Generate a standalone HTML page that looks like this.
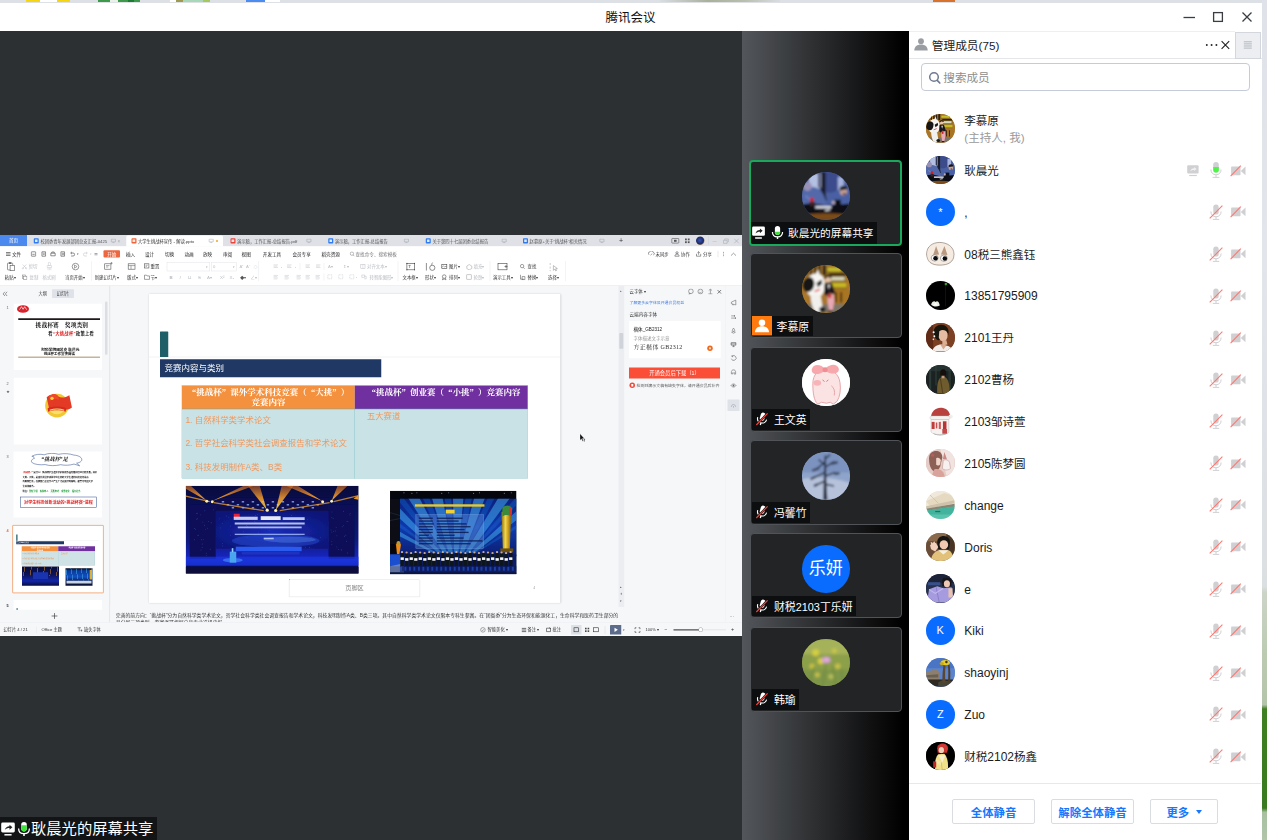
<!DOCTYPE html>
<html lang="zh-CN">
<head>
<meta charset="utf-8">
<title>腾讯会议</title>
<style>
*{box-sizing:border-box;margin:0;padding:0}
html,body{width:1267px;height:840px;overflow:hidden}
body{position:relative;font-family:"Liberation Sans","Noto Sans CJK SC",sans-serif;font-size:12px;color:#1b1b1b;background:#dfe3e8}
.abs{position:absolute}
#desk-top{left:0;top:0;width:1267px;height:3px;background:#dde0e5;overflow:hidden}
#desk-top i{position:absolute;top:0;height:2px;display:block}
#desk-right{left:1262px;top:0;width:5px;height:840px;background:linear-gradient(180deg,#dfe3e9 0,#e2e5ea 30%,#dcdfe2 69.800%,#ccd4c8 70.500%,#bccab2 78%,#b4c4aa 83.900%,#3f8022 84.400%,#3a7a20 96.200%,#a8c0a0 96.700%,#b2c6aa 100%)}
#win{left:0;top:3px;width:1262px;height:837px;background:#fff;overflow:hidden}
#titlebar{left:0;top:0;width:1262px;height:28px;background:#fff}
#title{left:0;top:0;width:1261px;height:28px;line-height:30px;text-align:center;font-size:12.500px;color:#111}
#main{left:0;top:28px;width:742px;height:809px;background:#2d3033;overflow:hidden}
#strip{left:742px;top:28px;width:167.500px;height:809px;background:linear-gradient(90deg,#53565b 0,#2e3032 42%,#121213 75%,#000 96%)}
#panel{left:909.300px;top:28px;width:352.700px;height:809px;background:#fff}
/* tiles */
.tile{position:absolute;left:8px;width:151.700px;height:85px;background:#232426;border:1px solid #505357;border-radius:4px;overflow:hidden}
.tile.act{border:2px solid #1aa85c;height:86px;left:7px;width:153px}
.tile .av{position:absolute;left:51px;top:11px;width:47.700px;height:47.700px;border-radius:50%;overflow:hidden}
.tile.act .av{left:51px;top:10px}
.tile .lb{position:absolute;left:.9px;bottom:1px;height:20.600px;background:#0d0e0f;color:#fff;font-size:10.900px;line-height:23px;padding:0 3.500px 0 25px;white-space:nowrap}
/* panel */
#phead{left:0;top:0;width:352.5px;height:28px;border-bottom:1px solid #e4e6ea}
#search{left:11.5px;top:32px;width:329px;height:28px;border:1px solid #c5cbd8;border-radius:4px;background:#fff}
.row{position:absolute;left:0;width:352px;height:30px}
.row .av{position:absolute;left:16.700px;top:.7px;width:28.600px;height:28.600px;border-radius:50%;overflow:hidden}
.row .nm{position:absolute;left:55px;top:.8px;height:30px;line-height:31px;font-size:12px;color:#1b1b1b;white-space:nowrap}
.row .ic{position:absolute;top:0}
.c{font-size:11.500px}
.blue{background:#0a6cff;color:#fff;text-align:center}
.btn{position:absolute;top:768.4px;height:24.600px;border:1px solid #d9dce1;border-radius:2px;color:#1677ff;font-size:11.400px;font-weight:bold;text-align:center;line-height:26px;background:#fff}
</style>
</head>
<body>
<div id="desk-top" class="abs">
<i style="left:26px;width:14px;background:#f5d514"></i><i style="left:40px;width:17px;background:#fff"></i><i style="left:57px;width:13px;background:#f5d514"></i>
<i style="left:98px;width:42px;background:#3c9a4a"></i><i style="left:110px;width:8px;background:#e8f2e6"></i><i style="left:128px;width:6px;background:#1d7a34"></i>
<i style="left:170px;width:6px;background:#fff"></i><i style="left:176px;width:7px;background:#9c9a55"></i><i style="left:183px;width:20px;background:#a8d8b8"></i><i style="left:203px;width:7px;background:#a6c860"></i>
<i style="left:246px;width:19px;background:#4c8cf0"></i><i style="left:265px;width:15px;background:#fff"></i>
<i style="left:660px;width:120px;background:linear-gradient(90deg,#d9dde2,#a9b09c 40%,#b9bfae 70%,#d9dde2)"></i>
<i style="left:933px;width:22px;background:#d9722c"></i>
</div>
<div id="desk-right" class="abs"></div>
<div id="win" class="abs">
<div id="titlebar" class="abs">
<div id="title" class="abs">腾讯会议</div>
<svg class="abs" style="left:1180px;top:4px" width="80" height="20" viewBox="0 0 80 20">
<path d="M3.5 10.5H15" stroke="#3a3d42" stroke-width="1.3" fill="none"/>
<rect x="33.6" y="5.6" width="8.8" height="8.8" stroke="#3a3d42" stroke-width="1.3" fill="none"/>
<path d="M62.5 5.5l9 9M71.500 5.5l-9 9" stroke="#3a3d42" stroke-width="1.3" fill="none"/>
</svg>
</div>
<div id="main" class="abs">
<div id="blabel" class="abs" style="left:0;top:786px;width:157px;height:23px;background:#131416;color:#fff;font-size:15.300px;line-height:22px;white-space:nowrap">
<svg class="abs" style="left:0;top:3.500px" width="16" height="16" viewBox="0 0 16 16"><rect x="1.200" y="1.600" width="13.600" height="9.800" rx="1.400" fill="#fff"/><path d="M4.400 13.800h7.200" stroke="#fff" stroke-width="1.500"/><path d="M4.800 9c.7-2.500 2.400-3.700 4.700-3.700v-1.600l2.900 2.500-2.900 2.500v-1.600c-1.900 0-3.400.5-4.700 1.900z" fill="#222"/></svg>
<svg class="abs" style="left:15.500px;top:3.500px" width="16" height="16" viewBox="0 0 16 16"><rect x="5.200" y="1" width="5.600" height="9.400" rx="2.800" fill="#fff"/><path d="M5.200 4.200h5.600v3.400a2.800 2.800 0 0 1-5.600 0z" fill="#3fe23a"/><path d="M2.600 7.400c0 3.200 2.300 5.200 5.400 5.200s5.400-2 5.400-5.200" stroke="#fff" stroke-width="1.300" fill="none"/><path d="M8 12.400v2.600" stroke="#fff" stroke-width="1.500" fill="none"/></svg>
<span class="abs" style="left:31px;top:1px">耿晨光的屏幕共享</span>
</div>
<div id="share" class="abs" style="left:0;top:204px;width:742px;height:401px;background:#fff;overflow:hidden">
<div id="wps" style="position:absolute;left:0;top:0;width:2968px;height:1604px;transform:scale(.25);transform-origin:0 0;background:#eceef1">
<div style="position:absolute;left:0.0px;top:0.0px;width:2968.0px;height:44.8px;background:#dfe1e7"></div>
<div style="position:absolute;left:0.0px;top:0.0px;width:108.0px;height:44.8px;background:#4c89ee"></div>
<div style="position:absolute;left:0.0px;top:10.3px;height:25.8px;line-height:25.8px;font-size:18.4px;color:#fff;white-space:nowrap;width:108.0px;text-align:center;">首页</div>
<div style="position:absolute;left:135.2px;top:12.8px;width:20.0px;height:20.8px;background:#2f7cf0;border-radius:3px"></div>
<div style="position:absolute;left:140.0px;top:18.4px;width:10.4px;height:9.6px;background:#fff;opacity:.85;border-radius:1px"></div>
<div style="position:absolute;left:161.6px;top:11.6px;height:24.1px;line-height:24.1px;font-size:17.2px;color:#555;white-space:nowrap;">校团委青年发展部团总支汇报-0425</div>
<svg style="position:absolute;left:442.0px;top:14.4px;" width="24.0" height="18.4" viewBox="0 0 6.00 4.60"><rect x=".8" y=".6" width="4.200" height="2.800" rx=".4" stroke="#9a9ea6" stroke-width=".5" fill="none"/><path d="M2 4.200h1.800" stroke="#9a9ea6" stroke-width=".5"/></svg>
<div style="position:absolute;left:470.0px;top:10.7px;height:25.8px;line-height:25.8px;font-size:18.4px;color:#aaa;white-space:nowrap;">×</div>
<div style="position:absolute;left:504.8px;top:2.4px;width:386.8px;height:42.4px;background:#fff;border-radius:6px 6px 0 0"></div>
<div style="position:absolute;left:525.6px;top:12.8px;width:20.0px;height:20.8px;background:#f0643c;border-radius:3px"></div>
<div style="position:absolute;left:530.4px;top:18.4px;width:10.4px;height:9.6px;background:#fff;opacity:.85;border-radius:1px"></div>
<div style="position:absolute;left:552.0px;top:11.6px;height:24.1px;line-height:24.1px;font-size:17.2px;color:#333;white-space:nowrap;">大学生挑战杯宣传 - 解读.pptx</div>
<svg style="position:absolute;left:832.8px;top:14.4px;" width="24.0" height="18.4" viewBox="0 0 6.00 4.60"><rect x=".8" y=".6" width="4.200" height="2.800" rx=".4" stroke="#9a9ea6" stroke-width=".5" fill="none"/><path d="M2 4.200h1.800" stroke="#9a9ea6" stroke-width=".5"/></svg>
<div style="position:absolute;left:863.6px;top:20.0px;width:8.0px;height:8.0px;background:#f5a623;border-radius:50%"></div>
<div style="position:absolute;left:921.6px;top:12.8px;width:20.0px;height:20.8px;background:#e8453c;border-radius:3px"></div>
<div style="position:absolute;left:926.4px;top:18.4px;width:10.4px;height:9.6px;background:#fff;opacity:.85;border-radius:1px"></div>
<div style="position:absolute;left:948.0px;top:11.6px;height:24.1px;line-height:24.1px;font-size:17.2px;color:#555;white-space:nowrap;">演示稿，工作汇报-总结报告.pdf</div>
<svg style="position:absolute;left:1223.6px;top:14.4px;" width="24.0" height="18.4" viewBox="0 0 6.00 4.60"><rect x=".8" y=".6" width="4.200" height="2.800" rx=".4" stroke="#9a9ea6" stroke-width=".5" fill="none"/><path d="M2 4.200h1.800" stroke="#9a9ea6" stroke-width=".5"/></svg>
<div style="position:absolute;left:1312.8px;top:12.8px;width:20.0px;height:20.8px;background:#2f7cf0;border-radius:3px"></div>
<div style="position:absolute;left:1317.6px;top:18.4px;width:10.4px;height:9.6px;background:#fff;opacity:.85;border-radius:1px"></div>
<div style="position:absolute;left:1339.2px;top:11.6px;height:24.1px;line-height:24.1px;font-size:17.2px;color:#555;white-space:nowrap;">演示稿，工作汇报-总结报告</div>
<svg style="position:absolute;left:1614.0px;top:14.4px;" width="24.0" height="18.4" viewBox="0 0 6.00 4.60"><rect x=".8" y=".6" width="4.200" height="2.800" rx=".4" stroke="#9a9ea6" stroke-width=".5" fill="none"/><path d="M2 4.200h1.800" stroke="#9a9ea6" stroke-width=".5"/></svg>
<div style="position:absolute;left:1703.2px;top:12.8px;width:20.0px;height:20.8px;background:#2f7cf0;border-radius:3px"></div>
<div style="position:absolute;left:1708.0px;top:18.4px;width:10.4px;height:9.6px;background:#fff;opacity:.85;border-radius:1px"></div>
<div style="position:absolute;left:1729.6px;top:11.6px;height:24.1px;line-height:24.1px;font-size:17.2px;color:#555;white-space:nowrap;">关于第四十七届团委总结报告</div>
<svg style="position:absolute;left:2005.2px;top:14.4px;" width="24.0" height="18.4" viewBox="0 0 6.00 4.60"><rect x=".8" y=".6" width="4.200" height="2.800" rx=".4" stroke="#9a9ea6" stroke-width=".5" fill="none"/><path d="M2 4.200h1.800" stroke="#9a9ea6" stroke-width=".5"/></svg>
<div style="position:absolute;left:2092.0px;top:12.8px;width:20.0px;height:20.8px;background:#2f7cf0;border-radius:3px"></div>
<div style="position:absolute;left:2096.8px;top:18.4px;width:10.4px;height:9.6px;background:#fff;opacity:.85;border-radius:1px"></div>
<div style="position:absolute;left:2118.4px;top:11.6px;height:24.1px;line-height:24.1px;font-size:17.2px;color:#555;white-space:nowrap;">赵慕原+关于“挑战杯”相关情况</div>
<svg style="position:absolute;left:2396.0px;top:14.4px;" width="24.0" height="18.4" viewBox="0 0 6.00 4.60"><rect x=".8" y=".6" width="4.200" height="2.800" rx=".4" stroke="#9a9ea6" stroke-width=".5" fill="none"/><path d="M2 4.200h1.800" stroke="#9a9ea6" stroke-width=".5"/></svg>
<div style="position:absolute;left:2476.0px;top:2.8px;height:39.2px;line-height:39.2px;font-size:28.0px;color:#333;white-space:nowrap;">+</div>
<svg style="position:absolute;left:2684.0px;top:10.4px;" width="40.0" height="25.6" viewBox="0 0 10.00 6.40"><rect x=".8" y="1" width="7" height="4.600" rx=".5" stroke="#555" stroke-width=".6" fill="none"/><rect x="3" y="2.300" width="2.600" height="2" fill="#555"/></svg>
<svg style="position:absolute;left:2738.0px;top:12.0px;" width="26.0" height="24.0" viewBox="0 0 6.50 6.00"><g fill="#555"><rect x=".5" y=".5" width="1.800" height="1.800"/><rect x="3.300" y=".5" width="1.800" height="1.800"/><rect x=".5" y="3.300" width="1.800" height="1.800"/><rect x="3.300" y="3.300" width="1.800" height="1.800"/></g></svg>
<div style="position:absolute;left:2784.0px;top:6.4px;width:33.6px;height:33.6px;background:radial-gradient(circle at 45% 45%,#3a55b0 0,#1a2a6a 55%,#caa050 78%,#e8b860 100%);border-radius:50%"></div>
<div style="position:absolute;left:2833.2px;top:6.0px;width:1.6px;height:34.0px;background:#c9ccd3"></div>
<div style="position:absolute;left:2850.4px;top:10.2px;height:23.5px;line-height:23.5px;font-size:16.8px;color:#9a9ea8;white-space:nowrap;">—</div>
<svg style="position:absolute;left:2890.0px;top:11.2px;" width="30.0" height="24.8" viewBox="0 0 7.50 6.20"><path d="M1 2.600h3.600v3H1zM2.200 2.400v-1.200h3.600v3h-1" stroke="#a5a9b2" stroke-width=".55" fill="none"/></svg>
<svg style="position:absolute;left:2934.0px;top:12.0px;" width="26.0" height="24.0" viewBox="0 0 6.50 6.00"><path d="M.8.8l4.400 4.400M5.200.8L.8 5.200" stroke="#a5a9b2" stroke-width=".6"/></svg>
<div style="position:absolute;left:0.0px;top:44.8px;width:2968.0px;height:155.2px;background:#fff"></div>
<svg style="position:absolute;left:22.0px;top:66.0px;" width="22.0" height="20.0" viewBox="0 0 5.50 5.00"><path d="M.5 1h4.500M.5 2.500h4.500M.5 4h4.500" stroke="#333" stroke-width=".6"/></svg>
<div style="position:absolute;left:48.0px;top:63.1px;height:25.8px;line-height:25.8px;font-size:18.4px;color:#222;white-space:nowrap;">文件</div>
<svg style="position:absolute;left:122.0px;top:64.0px;" width="24.0" height="24.0" viewBox="0 0 6.00 6.00"><rect x=".8" y=".8" width="4.400" height="4.400" rx=".5" stroke="#444" stroke-width=".6" fill="none"/><path d="M1.800 3.300h2.400" stroke="#444" stroke-width=".6"/></svg>
<svg style="position:absolute;left:163.2px;top:64.0px;" width="24.0" height="24.0" viewBox="0 0 6.00 6.00"><path d="M1.200.8h3.600v4.400h-3.600z" stroke="#444" stroke-width=".6" fill="none"/><path d="M2 2.200h2M2 3.400h2" stroke="#444" stroke-width=".5"/></svg>
<svg style="position:absolute;left:199.6px;top:64.0px;" width="24.0" height="24.0" viewBox="0 0 6.00 6.00"><path d="M.8 2.200h4.400v2.600h-4.400zM1.800 2.200v-1.200h2.400v1.200" stroke="#444" stroke-width=".6" fill="none"/></svg>
<svg style="position:absolute;left:238.8px;top:64.0px;" width="24.0" height="24.0" viewBox="0 0 6.00 6.00"><path d="M1.200.8h3.600v4.400h-3.600z" stroke="#444" stroke-width=".6" fill="none"/><circle cx="3.200" cy="3" r=".9" stroke="#444" stroke-width=".5" fill="none"/></svg>
<svg style="position:absolute;left:278.0px;top:64.0px;" width="24.0" height="24.0" viewBox="0 0 6.00 6.00"><path d="M1.400 2h2.200a1.500 1.500 0 0 1 0 3h-2M2.400 .9l-1.200 1.100 1.200 1.100" stroke="#444" stroke-width=".6" fill="none"/></svg>
<div style="position:absolute;left:308.0px;top:69.9px;height:14.6px;line-height:14.6px;font-size:10.4px;color:#555;white-space:nowrap;">▾</div>
<svg style="position:absolute;left:330.0px;top:64.0px;" width="24.0" height="24.0" viewBox="0 0 6.00 6.00"><path d="M4.600 2h-2.200a1.500 1.500 0 0 0 0 3h2M3.600 .9l1.200 1.100-1.200 1.100" stroke="#c4c6cc" stroke-width=".6" fill="none"/></svg>
<div style="position:absolute;left:358.0px;top:69.9px;height:14.6px;line-height:14.6px;font-size:10.4px;color:#ccc;white-space:nowrap;">▾</div>
<svg style="position:absolute;left:374.0px;top:66.0px;" width="20.0" height="20.0" viewBox="0 0 5.00 5.00"><path d="M1 2h3M1 3.300h3" stroke="#555" stroke-width=".5"/></svg>
<div style="position:absolute;left:414.0px;top:61.2px;width:66.0px;height:29.2px;background:#ee6640;border-radius:4px"></div>
<div style="position:absolute;left:414.0px;top:63.1px;height:25.8px;line-height:25.8px;font-size:18.4px;color:#fff;white-space:nowrap;width:66.0px;text-align:center;">开始</div>
<div style="position:absolute;left:504.0px;top:63.1px;height:25.8px;line-height:25.8px;font-size:18.4px;color:#222;white-space:nowrap;">插入</div>
<div style="position:absolute;left:580.0px;top:63.1px;height:25.8px;line-height:25.8px;font-size:18.4px;color:#222;white-space:nowrap;">设计</div>
<div style="position:absolute;left:660.0px;top:63.1px;height:25.8px;line-height:25.8px;font-size:18.4px;color:#222;white-space:nowrap;">切换</div>
<div style="position:absolute;left:737.6px;top:63.1px;height:25.8px;line-height:25.8px;font-size:18.4px;color:#222;white-space:nowrap;">动画</div>
<div style="position:absolute;left:812.0px;top:63.1px;height:25.8px;line-height:25.8px;font-size:18.4px;color:#222;white-space:nowrap;">放映</div>
<div style="position:absolute;left:892.0px;top:63.1px;height:25.8px;line-height:25.8px;font-size:18.4px;color:#222;white-space:nowrap;">审阅</div>
<div style="position:absolute;left:966.4px;top:63.1px;height:25.8px;line-height:25.8px;font-size:18.4px;color:#222;white-space:nowrap;">视图</div>
<div style="position:absolute;left:1051.2px;top:63.1px;height:25.8px;line-height:25.8px;font-size:18.4px;color:#222;white-space:nowrap;">开发工具</div>
<div style="position:absolute;left:1169.6px;top:63.1px;height:25.8px;line-height:25.8px;font-size:18.4px;color:#222;white-space:nowrap;">会员专享</div>
<div style="position:absolute;left:1286.0px;top:63.1px;height:25.8px;line-height:25.8px;font-size:18.4px;color:#222;white-space:nowrap;">稻壳资源</div>
<svg style="position:absolute;left:1398.0px;top:65.2px;" width="22.0" height="22.8" viewBox="0 0 5.50 5.70"><circle cx="2.400" cy="2.400" r="1.700" stroke="#777" stroke-width=".5" fill="none"/><path d="M3.600 3.700l1.200 1.200" stroke="#777" stroke-width=".5"/></svg>
<div style="position:absolute;left:1422.0px;top:63.1px;height:25.8px;line-height:25.8px;font-size:18.4px;color:#777;white-space:nowrap;">查找命令、搜索模板</div>
<svg style="position:absolute;left:2592.0px;top:64.0px;" width="28.0" height="24.0" viewBox="0 0 7.00 6.00"><path d="M1.200 3.800a1.600 1.600 0 0 1 .6-3 2 2 0 0 1 3.600.6 1.300 1.300 0 0 1 0 2.500" stroke="#444" stroke-width=".55" fill="none"/><path d="M2.500 4.200l1.800-1.600" stroke="#444" stroke-width=".5"/></svg>
<div style="position:absolute;left:2622.0px;top:63.7px;height:24.6px;line-height:24.6px;font-size:17.6px;color:#333;white-space:nowrap;">未同步</div>
<svg style="position:absolute;left:2696.0px;top:64.0px;" width="24.0" height="24.0" viewBox="0 0 6.00 6.00"><circle cx="3" cy="1.800" r="1.100" stroke="#444" stroke-width=".55" fill="none"/><path d="M.9 5.200c0-1.500 1-2.100 2.100-2.100s2.100.6 2.100 2.100z" stroke="#444" stroke-width=".55" fill="none"/></svg>
<div style="position:absolute;left:2724.0px;top:63.7px;height:24.6px;line-height:24.6px;font-size:17.6px;color:#333;white-space:nowrap;">协作</div>
<svg style="position:absolute;left:2782.0px;top:64.0px;" width="26.0" height="24.0" viewBox="0 0 6.50 6.00"><path d="M1 2.800v2.400h4.200v-2.400M3.100 3.800v-3M1.900 1.800l1.200-1.100 1.200 1.100" stroke="#444" stroke-width=".55" fill="none"/></svg>
<div style="position:absolute;left:2812.0px;top:63.7px;height:24.6px;line-height:24.6px;font-size:17.6px;color:#333;white-space:nowrap;">分享</div>
<div style="position:absolute;left:2871.2px;top:63.2px;width:1.6px;height:26.0px;background:#d5d7dc"></div>
<svg style="position:absolute;left:2888.0px;top:64.0px;" width="12.0" height="24.0" viewBox="0 0 3.00 6.00"><circle cx="1.500" cy="1.200" r=".45" fill="#444"/><circle cx="1.500" cy="3" r=".45" fill="#444"/><circle cx="1.500" cy="4.800" r=".45" fill="#444"/></svg>
<svg style="position:absolute;left:2920.0px;top:68.0px;" width="28.0" height="18.0" viewBox="0 0 7.00 4.50"><path d="M1 3.600l2.500-2.400 2.500 2.400" stroke="#555" stroke-width=".55" fill="none"/></svg>
<svg style="position:absolute;left:26.0px;top:106.0px;" width="36.0" height="40.0" viewBox="0 0 9.00 10.00"><rect x="1" y="1.600" width="5.200" height="6.800" rx=".6" stroke="#555" stroke-width=".6" fill="none"/><rect x="2.400" y=".8" width="2.400" height="1.500" fill="#555"/><rect x="3.600" y="4" width="4.400" height="5.200" fill="#fff" stroke="#555" stroke-width=".6"/></svg>
<div style="position:absolute;left:19.2px;top:155.7px;height:24.6px;line-height:24.6px;font-size:17.6px;color:#333;white-space:nowrap;">粘贴▾</div>
<svg style="position:absolute;left:86.0px;top:114.0px;" width="24.0" height="24.0" viewBox="0 0 6.00 6.00"><path d="M1.200 1l3.400 3.600M4.800 1L1.400 4.600" stroke="#b9bcc3" stroke-width=".5"/><circle cx="1.300" cy="5" r=".7" stroke="#b9bcc3" stroke-width=".4" fill="none"/><circle cx="4.700" cy="5" r=".7" stroke="#b9bcc3" stroke-width=".4" fill="none"/></svg>
<div style="position:absolute;left:114.0px;top:113.7px;height:24.6px;line-height:24.6px;font-size:17.6px;color:#b9bcc3;white-space:nowrap;">剪切</div>
<svg style="position:absolute;left:86.0px;top:156.0px;" width="24.0" height="24.0" viewBox="0 0 6.00 6.00"><rect x="1" y="1" width="3.200" height="3.600" stroke="#777" stroke-width=".5" fill="none"/><rect x="2.200" y="2.200" width="3.200" height="3.200" stroke="#777" stroke-width=".5" fill="#fff"/></svg>
<div style="position:absolute;left:118.0px;top:155.7px;height:24.6px;line-height:24.6px;font-size:17.6px;color:#b9bcc3;white-space:nowrap;">复制</div>
<svg style="position:absolute;left:184.0px;top:108.0px;" width="28.0" height="36.0" viewBox="0 0 7.00 9.00"><rect x="2.200" y=".8" width="2.400" height="2.600" stroke="#c5c8ce" stroke-width=".5" fill="none"/><path d="M1.200 3.600h4.400v2h-4.400zM2 5.600v2.600M3.400 5.600v2.600M4.800 5.600v2.600" stroke="#c5c8ce" stroke-width=".5" fill="none"/></svg>
<div style="position:absolute;left:169.6px;top:155.7px;height:24.6px;line-height:24.6px;font-size:17.6px;color:#b9bcc3;white-space:nowrap;">格式刷</div>
<svg style="position:absolute;left:282.0px;top:108.0px;" width="40.0" height="40.0" viewBox="0 0 10.00 10.00"><circle cx="5" cy="4.600" r="3.300" stroke="#555" stroke-width=".6" fill="none"/><path d="M4 3l2.600 1.600-2.600 1.600z" stroke="#555" stroke-width=".5" fill="none"/></svg>
<div style="position:absolute;left:260.0px;top:155.7px;height:24.6px;line-height:24.6px;font-size:17.6px;color:#333;white-space:nowrap;">当页开始▾</div>
<div style="position:absolute;left:364.0px;top:104.0px;width:1.6px;height:80.0px;background:#e6e8ec"></div>
<svg style="position:absolute;left:414.0px;top:108.0px;" width="40.0" height="40.0" viewBox="0 0 10.00 10.00"><rect x="1.200" y="1.800" width="6.200" height="5.400" stroke="#555" stroke-width=".6" fill="none"/><path d="M2.400 3.600h3.600M2.400 5h2.400" stroke="#555" stroke-width=".5"/><path d="M8 0v2.400M6.800 1.200h2.400" stroke="#555" stroke-width=".5"/></svg>
<div style="position:absolute;left:378.8px;top:155.7px;height:24.6px;line-height:24.6px;font-size:17.6px;color:#333;white-space:nowrap;">新建幻灯片▾</div>
<svg style="position:absolute;left:508.0px;top:108.0px;" width="40.0" height="40.0" viewBox="0 0 10.00 10.00"><rect x="1.200" y="1.800" width="6.800" height="5.400" stroke="#555" stroke-width=".6" fill="none"/><path d="M1.200 3.600h6.800M4 3.600v3.600" stroke="#555" stroke-width=".5"/></svg>
<div style="position:absolute;left:508.0px;top:155.7px;height:24.6px;line-height:24.6px;font-size:17.6px;color:#333;white-space:nowrap;">版式▾</div>
<svg style="position:absolute;left:574.0px;top:112.0px;" width="26.0" height="28.0" viewBox="0 0 6.50 7.00"><rect x=".8" y=".8" width="4.600" height="4.200" stroke="#555" stroke-width=".6" fill="none"/><path d="M2 2.200h2.200M2 3.400h1.400" stroke="#555" stroke-width=".5"/></svg>
<div style="position:absolute;left:602.0px;top:113.7px;height:24.6px;line-height:24.6px;font-size:17.6px;color:#333;white-space:nowrap;">重置</div>
<svg style="position:absolute;left:574.0px;top:155.2px;" width="26.0" height="25.6" viewBox="0 0 6.50 6.40"><path d="M1 1.400h2l.6.800h2.400v3.400h-5z" stroke="#555" stroke-width=".55" fill="none"/></svg>
<div style="position:absolute;left:602.0px;top:155.7px;height:24.6px;line-height:24.6px;font-size:17.6px;color:#333;white-space:nowrap;">节▾</div>
<div style="position:absolute;left:666.8px;top:108.0px;width:173.2px;height:37.2px;border:2px solid #e1e3e8;background:#fff"></div>
<div style="position:absolute;left:844.0px;top:108.0px;width:102.8px;height:37.2px;border:2px solid #e1e3e8;background:#fff"></div>
<div style="position:absolute;left:822.0px;top:119.9px;height:14.6px;line-height:14.6px;font-size:10.4px;color:#aaa;white-space:nowrap;">▾</div>
<div style="position:absolute;left:852.0px;top:114.6px;height:23.5px;line-height:23.5px;font-size:16.8px;color:#bbb;white-space:nowrap;">0</div>
<div style="position:absolute;left:930.0px;top:119.9px;height:14.6px;line-height:14.6px;font-size:10.4px;color:#aaa;white-space:nowrap;">▾</div>
<div style="position:absolute;left:958.0px;top:114.2px;height:23.5px;line-height:23.5px;font-size:16.8px;color:#b9bcc3;white-space:nowrap;">A⁺</div>
<div style="position:absolute;left:984.0px;top:114.2px;height:23.5px;line-height:23.5px;font-size:16.8px;color:#b9bcc3;white-space:nowrap;">A⁻</div>
<div style="position:absolute;left:1014.0px;top:114.2px;height:23.5px;line-height:23.5px;font-size:16.8px;color:#b9bcc3;white-space:nowrap;">◇</div>
<div style="position:absolute;left:678.0px;top:155.7px;height:24.6px;line-height:24.6px;font-size:17.6px;color:#b9bcc3;white-space:nowrap;font-weight:bold">B</div>
<div style="position:absolute;left:718.0px;top:155.7px;height:24.6px;line-height:24.6px;font-size:17.6px;color:#b9bcc3;white-space:nowrap;font-style:italic">I</div>
<div style="position:absolute;left:752.0px;top:155.7px;height:24.6px;line-height:24.6px;font-size:17.6px;color:#b9bcc3;white-space:nowrap;text-decoration:underline">U</div>
<div style="position:absolute;left:792.0px;top:155.7px;height:24.6px;line-height:24.6px;font-size:17.6px;color:#b9bcc3;white-space:nowrap;text-decoration:line-through">S</div>
<div style="position:absolute;left:828.0px;top:155.7px;height:24.6px;line-height:24.6px;font-size:17.6px;color:#b9bcc3;white-space:nowrap;">A▾</div>
<div style="position:absolute;left:880.0px;top:155.7px;height:24.6px;line-height:24.6px;font-size:17.6px;color:#b9bcc3;white-space:nowrap;">X²</div>
<div style="position:absolute;left:918.0px;top:155.7px;height:24.6px;line-height:24.6px;font-size:17.6px;color:#b9bcc3;white-space:nowrap;">X₂</div>
<div style="position:absolute;left:960.0px;top:155.7px;height:24.6px;line-height:24.6px;font-size:17.6px;color:#555;white-space:nowrap;">◆▾</div>
<div style="position:absolute;left:1002.0px;top:155.7px;height:24.6px;line-height:24.6px;font-size:17.6px;color:#b9bcc3;white-space:nowrap;">∠▾</div>
<div style="position:absolute;left:1033.2px;top:104.0px;width:1.6px;height:80.0px;background:#e6e8ec"></div>
<svg style="position:absolute;left:1092.0px;top:115.6px;" width="24.0" height="20.8" viewBox="0 0 6.00 5.20"><path d="M.6 0.9h4.4" stroke="#b9bcc3" stroke-width=".45"/><path d="M.6 2.2h3.6" stroke="#b9bcc3" stroke-width=".45"/><path d="M.6 3.5h4.4" stroke="#b9bcc3" stroke-width=".45"/></svg>
<svg style="position:absolute;left:1146.0px;top:115.6px;" width="24.0" height="20.8" viewBox="0 0 6.00 5.20"><path d="M.6 0.9h4.4" stroke="#b9bcc3" stroke-width=".45"/><path d="M.6 2.2h3.6" stroke="#b9bcc3" stroke-width=".45"/><path d="M.6 3.5h4.4" stroke="#b9bcc3" stroke-width=".45"/></svg>
<svg style="position:absolute;left:1220.0px;top:115.6px;" width="24.0" height="20.8" viewBox="0 0 6.00 5.20"><path d="M.6 0.9h4.4" stroke="#b9bcc3" stroke-width=".45"/><path d="M.6 2.2h3.6" stroke="#b9bcc3" stroke-width=".45"/><path d="M.6 3.5h4.4" stroke="#b9bcc3" stroke-width=".45"/></svg>
<svg style="position:absolute;left:1262.0px;top:115.6px;" width="24.0" height="20.8" viewBox="0 0 6.00 5.20"><path d="M.6 0.9h4.4" stroke="#b9bcc3" stroke-width=".45"/><path d="M.6 2.2h3.6" stroke="#b9bcc3" stroke-width=".45"/><path d="M.6 3.5h4.4" stroke="#b9bcc3" stroke-width=".45"/></svg>
<div style="position:absolute;left:1124.0px;top:120.5px;height:13.4px;line-height:13.4px;font-size:9.6px;color:#b9bcc3;white-space:nowrap;">▾</div>
<div style="position:absolute;left:1178.0px;top:120.5px;height:13.4px;line-height:13.4px;font-size:9.6px;color:#b9bcc3;white-space:nowrap;">▾</div>
<div style="position:absolute;left:1199.2px;top:112.0px;width:1.6px;height:28.0px;background:#e6e8ec"></div>
<div style="position:absolute;left:1295.2px;top:112.0px;width:1.6px;height:28.0px;background:#e6e8ec"></div>
<div style="position:absolute;left:1312.0px;top:114.2px;height:23.5px;line-height:23.5px;font-size:16.8px;color:#b9bcc3;white-space:nowrap;">A▾</div>
<div style="position:absolute;left:1372.0px;top:114.2px;height:23.5px;line-height:23.5px;font-size:16.8px;color:#b9bcc3;white-space:nowrap;">⇕▾</div>
<svg style="position:absolute;left:1092.0px;top:157.6px;" width="24.0" height="20.8" viewBox="0 0 6.00 5.20"><path d="M.6 0.9h4.4" stroke="#b9bcc3" stroke-width=".45"/><path d="M.6 2.2h3.6" stroke="#b9bcc3" stroke-width=".45"/><path d="M.6 3.5h4.4" stroke="#b9bcc3" stroke-width=".45"/><path d="M.6 4.8h3.6" stroke="#b9bcc3" stroke-width=".45"/></svg>
<svg style="position:absolute;left:1136.0px;top:157.6px;" width="24.0" height="20.8" viewBox="0 0 6.00 5.20"><path d="M.6 0.9h4.4" stroke="#b9bcc3" stroke-width=".45"/><path d="M.6 2.2h3.6" stroke="#b9bcc3" stroke-width=".45"/><path d="M.6 3.5h4.4" stroke="#b9bcc3" stroke-width=".45"/><path d="M.6 4.8h3.6" stroke="#b9bcc3" stroke-width=".45"/></svg>
<svg style="position:absolute;left:1184.0px;top:157.6px;" width="24.0" height="20.8" viewBox="0 0 6.00 5.20"><path d="M.6 0.9h4.4" stroke="#b9bcc3" stroke-width=".45"/><path d="M.6 2.2h3.6" stroke="#b9bcc3" stroke-width=".45"/><path d="M.6 3.5h4.4" stroke="#b9bcc3" stroke-width=".45"/><path d="M.6 4.8h3.6" stroke="#b9bcc3" stroke-width=".45"/></svg>
<svg style="position:absolute;left:1220.0px;top:157.6px;" width="24.0" height="20.8" viewBox="0 0 6.00 5.20"><path d="M.6 0.9h4.4" stroke="#b9bcc3" stroke-width=".45"/><path d="M.6 2.2h3.6" stroke="#b9bcc3" stroke-width=".45"/><path d="M.6 3.5h4.4" stroke="#b9bcc3" stroke-width=".45"/><path d="M.6 4.8h3.6" stroke="#b9bcc3" stroke-width=".45"/></svg>
<svg style="position:absolute;left:1260.0px;top:157.6px;" width="24.0" height="20.8" viewBox="0 0 6.00 5.20"><path d="M.6 0.9h4.4" stroke="#b9bcc3" stroke-width=".45"/><path d="M.6 2.2h3.6" stroke="#b9bcc3" stroke-width=".45"/><path d="M.6 3.5h4.4" stroke="#b9bcc3" stroke-width=".45"/><path d="M.6 4.8h3.6" stroke="#b9bcc3" stroke-width=".45"/></svg>
<div style="position:absolute;left:1295.2px;top:154.0px;width:1.6px;height:28.0px;background:#e6e8ec"></div>
<svg style="position:absolute;left:1308.0px;top:156.0px;" width="24.0" height="24.0" viewBox="0 0 6.00 6.00"><rect x=".8" y=".8" width="4" height="4" stroke="#b9bcc3" stroke-width=".45" fill="none" stroke-dasharray="1 .6"/></svg>
<svg style="position:absolute;left:1352.0px;top:156.0px;" width="24.0" height="24.0" viewBox="0 0 6.00 6.00"><rect x=".8" y=".8" width="4" height="4" stroke="#b9bcc3" stroke-width=".45" fill="none" stroke-dasharray="1 .6"/></svg>
<svg style="position:absolute;left:1396.0px;top:156.0px;" width="24.0" height="24.0" viewBox="0 0 6.00 6.00"><rect x=".8" y=".8" width="4" height="4" stroke="#b9bcc3" stroke-width=".45" fill="none" stroke-dasharray="1 .6"/></svg>
<div style="position:absolute;left:1422.0px;top:162.5px;height:13.4px;line-height:13.4px;font-size:9.6px;color:#b9bcc3;white-space:nowrap;">▾</div>
<svg style="position:absolute;left:1440.0px;top:114.0px;" width="24.0" height="24.0" viewBox="0 0 6.00 6.00"><rect x=".8" y=".8" width="4.200" height="4.200" stroke="#b9bcc3" stroke-width=".5" fill="none"/><path d="M2.900.8v4.200" stroke="#b9bcc3" stroke-width=".4"/></svg>
<div style="position:absolute;left:1468.0px;top:113.7px;height:24.6px;line-height:24.6px;font-size:17.6px;color:#b9bcc3;white-space:nowrap;">对齐文本▾</div>
<svg style="position:absolute;left:1444.0px;top:156.0px;" width="28.0" height="24.0" viewBox="0 0 7.00 6.00"><path d="M.8 1h2.800v2.400h-2.800zM3.600 2.200h1.600v2.600h-2" stroke="#b9bcc3" stroke-width=".5" fill="none"/></svg>
<div style="position:absolute;left:1478.0px;top:155.7px;height:24.6px;line-height:24.6px;font-size:17.6px;color:#b9bcc3;white-space:nowrap;">转智能图形▾</div>
<div style="position:absolute;left:1591.2px;top:104.0px;width:1.6px;height:80.0px;background:#e6e8ec"></div>
<svg style="position:absolute;left:1622.0px;top:108.0px;" width="44.0" height="40.0" viewBox="0 0 11.00 10.00"><rect x="1.400" y="1.400" width="7.600" height="6.400" stroke="#444" stroke-width=".6" fill="none"/><path d="M3 3.400h2.200M4.100 3.400v2.600" stroke="#444" stroke-width=".5"/><rect x=".9" y=".9" width="1" height="1" fill="#444"/><rect x="8.500" y=".9" width="1" height="1" fill="#444"/><rect x=".9" y="7.300" width="1" height="1" fill="#444"/><rect x="8.500" y="7.300" width="1" height="1" fill="#444"/></svg>
<div style="position:absolute;left:1610.0px;top:155.7px;height:24.6px;line-height:24.6px;font-size:17.6px;color:#333;white-space:nowrap;">文本框▾</div>
<svg style="position:absolute;left:1700.0px;top:108.0px;" width="52.0" height="40.0" viewBox="0 0 13.00 10.00"><path d="M1.400 1v7.500" stroke="#444" stroke-width=".6"/><circle cx="7.300" cy="5.800" r="2.600" stroke="#444" stroke-width=".6" fill="none"/><path d="M7.300 3.200c-1.500-1.200-.4-2.400.8-2.200" stroke="#444" stroke-width=".5" fill="none"/></svg>
<div style="position:absolute;left:1700.0px;top:155.7px;height:24.6px;line-height:24.6px;font-size:17.6px;color:#333;white-space:nowrap;">形状▾</div>
<svg style="position:absolute;left:1764.0px;top:114.0px;" width="28.0" height="26.0" viewBox="0 0 7.00 6.50"><rect x=".8" y=".8" width="5" height="4.200" stroke="#444" stroke-width=".6" fill="none"/><path d="M.8 4l1.600-1.600 1.400 1.200 1-1 1 1" stroke="#444" stroke-width=".45" fill="none"/></svg>
<div style="position:absolute;left:1796.0px;top:113.7px;height:24.6px;line-height:24.6px;font-size:17.6px;color:#333;white-space:nowrap;">图片▾</div>
<svg style="position:absolute;left:1764.0px;top:156.0px;" width="28.0" height="26.0" viewBox="0 0 7.00 6.50"><circle cx="3.200" cy="2.600" r="1.800" stroke="#444" stroke-width=".55" fill="none"/><path d="M2 4l-.6 2 1.800-1 1.800 1-.6-2" stroke="#444" stroke-width=".5" fill="none"/></svg>
<div style="position:absolute;left:1796.0px;top:155.7px;height:24.6px;line-height:24.6px;font-size:17.6px;color:#333;white-space:nowrap;">排列▾</div>
<svg style="position:absolute;left:1864.0px;top:114.0px;" width="28.0" height="26.0" viewBox="0 0 7.00 6.50"><path d="M3.200 1l2.600 1.600v2.400l-2.600 1.400-2.400-1.400v-2.400z" stroke="#999" stroke-width=".5" fill="none"/></svg>
<div style="position:absolute;left:1894.0px;top:113.7px;height:24.6px;line-height:24.6px;font-size:17.6px;color:#b9bcc3;white-space:nowrap;">填充▾</div>
<svg style="position:absolute;left:1864.0px;top:156.0px;" width="28.0" height="26.0" viewBox="0 0 7.00 6.50"><rect x=".8" y=".8" width="4.400" height="4.400" stroke="#999" stroke-width=".5" fill="none"/></svg>
<div style="position:absolute;left:1894.0px;top:155.7px;height:24.6px;line-height:24.6px;font-size:17.6px;color:#b9bcc3;white-space:nowrap;">轮廓▾</div>
<div style="position:absolute;left:1959.2px;top:104.0px;width:1.6px;height:80.0px;background:#e6e8ec"></div>
<svg style="position:absolute;left:1988.0px;top:108.0px;" width="52.0" height="40.0" viewBox="0 0 13.00 10.00"><rect x="1" y="1.400" width="9" height="6.400" stroke="#444" stroke-width=".6" fill="none"/><path d="M7.500 4.500h3M9 3v3" stroke="#444" stroke-width=".6"/></svg>
<div style="position:absolute;left:1972.0px;top:155.7px;height:24.6px;line-height:24.6px;font-size:17.6px;color:#333;white-space:nowrap;">演示工具▾</div>
<svg style="position:absolute;left:2078.0px;top:114.0px;" width="26.0" height="26.0" viewBox="0 0 6.50 6.50"><circle cx="2.600" cy="2.600" r="1.700" stroke="#444" stroke-width=".5" fill="none"/><path d="M3.800 3.900l1.400 1.400" stroke="#444" stroke-width=".5"/></svg>
<div style="position:absolute;left:2110.0px;top:113.7px;height:24.6px;line-height:24.6px;font-size:17.6px;color:#333;white-space:nowrap;">查找</div>
<svg style="position:absolute;left:2078.0px;top:156.0px;" width="26.0" height="26.0" viewBox="0 0 6.50 6.50"><path d="M1 .8v4.400h3.200M2.600 2.600h2.800v3h-2.800z" stroke="#444" stroke-width=".5" fill="none"/></svg>
<div style="position:absolute;left:2110.0px;top:155.7px;height:24.6px;line-height:24.6px;font-size:17.6px;color:#333;white-space:nowrap;">替换▾</div>
<svg style="position:absolute;left:2192.0px;top:108.0px;" width="48.0" height="40.0" viewBox="0 0 12.00 10.00"><path d="M2.200 1v2M2.200 4.600v2M2.200 8v1.200" stroke="#999" stroke-width=".5"/><path d="M5.400 3.600l4 3-1.800.2.900 1.700-.8.400-.9-1.700-1.400 1.100z" stroke="#777" stroke-width=".45" fill="none"/></svg>
<div style="position:absolute;left:2192.0px;top:155.7px;height:24.6px;line-height:24.6px;font-size:17.6px;color:#333;white-space:nowrap;">选择▾</div>
<div style="position:absolute;left:2261.2px;top:104.0px;width:1.6px;height:80.0px;background:#e6e8ec"></div>
<div style="position:absolute;left:0.0px;top:200.0px;width:2968.0px;height:1404.8px;background:#f6f7f9"></div>
<div style="position:absolute;left:0.0px;top:200.0px;width:2968.0px;height:6.0px;background:linear-gradient(180deg,#ecedf0,#f6f7f9)"></div>
<div style="position:absolute;left:436.4px;top:204.0px;width:4.8px;height:1344.0px;background:#e6e8eb"></div>
<svg style="position:absolute;left:10.0px;top:224.0px;" width="22.0" height="24.0" viewBox="0 0 5.50 6.00"><path d="M2.400 .8l-1.800 2.100 1.800 2.100M4.600 .8l-1.800 2.100 1.800 2.100" stroke="#555" stroke-width=".6" fill="none"/></svg>
<div style="position:absolute;left:154.0px;top:224.2px;height:23.5px;line-height:23.5px;font-size:16.8px;color:#444;white-space:nowrap;">大纲</div>
<div style="position:absolute;left:208.0px;top:217.2px;width:88.0px;height:34.8px;background:#dfe2e9;border-radius:3px"></div>
<div style="position:absolute;left:208.0px;top:224.2px;height:23.5px;line-height:23.5px;font-size:16.8px;color:#333;white-space:nowrap;width:88.0px;text-align:center;">幻灯片</div>
<div style="position:absolute;left:420.0px;top:266.0px;width:9.6px;height:213.2px;background:#dcdee2;border-radius:4px"></div>
<div style="position:absolute;left:26.0px;top:281.4px;height:21.3px;line-height:21.3px;font-size:15.2px;color:#666;white-space:nowrap;">1</div>
<div style="position:absolute;left:26.0px;top:585.4px;height:21.3px;line-height:21.3px;font-size:15.2px;color:#666;white-space:nowrap;">2</div>
<div style="position:absolute;left:26.0px;top:877.4px;height:21.3px;line-height:21.3px;font-size:15.2px;color:#666;white-space:nowrap;">3</div>
<div style="position:absolute;left:26.0px;top:1173.4px;height:21.3px;line-height:21.3px;font-size:15.2px;color:#e8703a;white-space:nowrap;font-weight:bold">4</div>
<div style="position:absolute;left:26.0px;top:1473.4px;height:21.3px;line-height:21.3px;font-size:15.2px;color:#333;white-space:nowrap;font-weight:bold">5</div>
<div style="position:absolute;left:26.0px;top:617.6px;height:16.8px;line-height:16.8px;font-size:12.0px;color:#555;white-space:nowrap;">★</div>
<div style="position:absolute;left:55.0px;top:275.0px;width:353.0px;height:265.0px;background:#fff"></div>
<svg style="position:absolute;left:66.0px;top:278.0px;" width="54.0" height="36.0" viewBox="0 0 13.50 9.00"><ellipse cx="6.500" cy="4.500" rx="6" ry="3.800" fill="#d8222c"/><path d="M3 5.200l2-3 1.600 2.600 1.600-2.600 2 3" stroke="#fff" stroke-width=".7" fill="none"/></svg>
<div style="position:absolute;left:73.2px;top:332.8px;width:326.8px;height:6.8px;background:#1e1a18"></div>
<div style="position:absolute;left:71.0px;top:346.4px;height:31.9px;line-height:31.9px;font-size:22.8px;color:#111;white-space:nowrap;width:353.0px;text-align:center;font-family:'Liberation Serif','Noto Serif CJK SC',serif;font-weight:bold;letter-spacing:.6px">挑战杯赛　奖项类别</div>
<div style="position:absolute;left:193.2px;top:380.0px;height:24.1px;line-height:24.1px;font-size:17.2px;color:#222;white-space:nowrap;font-weight:bold;letter-spacing:1px">看<span style="color:#e02020">“大挑战杯”</span>政策上看</div>
<div style="position:absolute;left:65.0px;top:447.2px;height:20.7px;line-height:20.7px;font-size:14.8px;color:#111;white-space:nowrap;width:353.0px;text-align:center;font-weight:bold">财税学院团总支 耿晨光</div>
<div style="position:absolute;left:61.0px;top:467.0px;height:19.6px;line-height:19.6px;font-size:14.0px;color:#111;white-space:nowrap;width:353.0px;text-align:center;font-weight:bold">挑战杯工作宣传解读</div>
<div style="position:absolute;left:73.2px;top:487.2px;width:326.8px;height:2.8px;background:#8a6a3a"></div>
<div style="position:absolute;left:55.0px;top:570.8px;width:353.0px;height:266.8px;background:#fff"></div>
<svg style="position:absolute;left:166.0px;top:610.0px;" width="132.0" height="132.0" viewBox="0 0 32 31"><circle cx="15" cy="17" r="11.500" fill="#f1c832"/><circle cx="15" cy="17" r="8.500" fill="#f7df6a"/><path d="M5 9c4-3 8-3 11-1s7 1.500 11-1l2.500 12c-4 3-8 2.500-11 .5s-7-1.500-11 1.500z" fill="#e23a24"/><path d="M7 7.500c4-2.500 7-2 9 0l1 4c-3-1.500-6-1-9 1z" fill="#ee4a2a"/><circle cx="10.200" cy="10" r="1.600" fill="#f7d23a"/><path d="M6 19.500c5-2 13-2 18 0l-.6 3.500c-5-1.800-12-1.800-17 0z" fill="#d62a20"/><path d="M8 21.500c4-1.200 10-1.200 14 0" stroke="#f7e27a" stroke-width="1" fill="none"/></svg>
<div style="position:absolute;left:53.6px;top:866.0px;width:354.4px;height:264.4px;background:#fff"></div>
<svg style="position:absolute;left:96.0px;top:871.2px;" width="248.0" height="57.6" viewBox="0 0 59 14"><path d="M7 3.500c3-2 8-2.500 12-1.500 4-1.800 10-1.800 14-.500 5-1.200 11-.600 15 .800 4 .300 7 1.800 7.500 3.800.500 2.200-2 3.600-5 4l3 2.600-5.500-1.700c-4 1.300-9 1.500-13 .600-5 1.300-11 1.200-15-.100-5 .600-10-.100-12.500-1.700-2.500-2 .500-4 2-4.400-1.500-1 .500-2 -2.500-1.900z" fill="#fff" stroke="#2a4a8a" stroke-width=".5"/></svg>
<div style="position:absolute;left:100.0px;top:882.4px;height:29.7px;line-height:29.7px;font-size:21.2px;color:#111;white-space:nowrap;width:236.0px;text-align:center;font-family:'Liberation Serif','Noto Serif CJK SC',serif;font-weight:bold;font-style:italic">“挑战杯”是</div>
<div style="position:absolute;left:90.0px;top:944.1px;height:12.6px;line-height:12.6px;font-size:9.0px;color:#111;white-space:nowrap;width:296.0px;text-align:left;font-weight:bold;letter-spacing:-.2px;overflow:hidden"><span style="color:#e02020">“挑战杯”</span>一是什么：挑战杯学生课外学术科技作品竞赛和创业计划竞赛，简称</div>
<div style="position:absolute;left:90.0px;top:962.5px;height:12.6px;line-height:12.6px;font-size:9.0px;color:#111;white-space:nowrap;width:296.0px;text-align:left;font-weight:bold;letter-spacing:-.2px;overflow:hidden">大挑、小挑，是由共青团中央等单位主办的大学生课外科技文化活动</div>
<div style="position:absolute;left:90.0px;top:980.1px;height:12.6px;line-height:12.6px;font-size:9.0px;color:#111;white-space:nowrap;width:296.0px;text-align:left;font-weight:bold;letter-spacing:-.2px;overflow:hidden">的奥林匹克，在高校乃至社会上产生广泛而良好的影响，被誉为中国大学</div>
<div style="position:absolute;left:90.0px;top:997.7px;height:12.6px;line-height:12.6px;font-size:9.0px;color:#111;white-space:nowrap;width:296.0px;text-align:left;font-weight:bold;letter-spacing:-.2px;overflow:hidden">生科技盛会。</div>
<div style="position:absolute;left:90.0px;top:1018.8px;height:12.0px;line-height:12.0px;font-size:8.6px;color:#111;white-space:nowrap;font-weight:bold">特点：<span style="color:#1a9a3a">创新引领　实践育人　竞赛育才　成果转化　服务社会</span></div>
<div style="position:absolute;left:81.2px;top:1047.2px;width:305.6px;height:42.4px;border:2px solid #2a4a8a;background:#fff"></div>
<div style="position:absolute;left:81.2px;top:1056.7px;height:22.7px;line-height:22.7px;font-size:16.2px;color:#e02020;white-space:nowrap;width:305.6px;text-align:center;font-weight:bold">对学生科技创新活动的<span>“挑战杯赛”</span>进程</div>
<div style="position:absolute;left:48.8px;top:1160.0px;width:366.4px;height:273.2px;background:#fff;border:3px solid #f0955c;border-radius:3px"></div>
<div style="position:absolute;left:65.2px;top:1198.0px;width:5.2px;height:26.0px;background:#1f5f68"></div>
<div style="position:absolute;left:65.2px;top:1220.8px;width:328.8px;height:1.2px;background:#e3e3e3"></div>
<div style="position:absolute;left:65.2px;top:1225.2px;width:190.8px;height:12.0px;background:#1f3864"></div>
<div style="position:absolute;left:68.0px;top:1226.4px;height:9.5px;line-height:9.5px;font-size:6.8px;color:#fff;white-space:nowrap;">竞赛内容与类别</div>
<div style="position:absolute;left:86.8px;top:1244.8px;width:146.4px;height:20.0px;background:#f4913e"></div>
<div style="position:absolute;left:233.2px;top:1244.8px;width:146.8px;height:20.0px;background:#7030a0"></div>
<div style="position:absolute;left:86.8px;top:1245.9px;height:9.0px;line-height:9.0px;font-size:6.4px;color:#fff;white-space:nowrap;width:146.4px;text-align:center;font-weight:bold">“挑战杯”课外学术科技竞赛</div>
<div style="position:absolute;left:86.8px;top:1254.7px;height:9.0px;line-height:9.0px;font-size:6.4px;color:#fff;white-space:nowrap;width:146.4px;text-align:center;font-weight:bold">竞赛内容</div>
<div style="position:absolute;left:233.2px;top:1245.9px;height:9.0px;line-height:9.0px;font-size:6.4px;color:#fff;white-space:nowrap;width:146.8px;text-align:center;font-weight:bold">“挑战杯”创业赛竞赛内容</div>
<div style="position:absolute;left:86.8px;top:1264.8px;width:293.2px;height:57.6px;background:#cfe3e6;border:1px solid #9cc5cc"></div>
<div style="position:absolute;left:232.8px;top:1264.8px;width:0.8px;height:57.6px;background:#9cc5cc"></div>
<div style="position:absolute;left:90.0px;top:1269.8px;height:9.2px;line-height:9.2px;font-size:6.6px;color:#f08a40;white-space:nowrap;">1. 自然科学类学术论文</div>
<div style="position:absolute;left:90.0px;top:1288.2px;height:9.2px;line-height:9.2px;font-size:6.6px;color:#f08a40;white-space:nowrap;">2. 哲学社会科学类社会调查报告和学术论文</div>
<div style="position:absolute;left:90.0px;top:1307.4px;height:9.2px;line-height:9.2px;font-size:6.6px;color:#f08a40;white-space:nowrap;">3. 科技发明制作A类、B类</div>
<div style="position:absolute;left:244.0px;top:1267.4px;height:9.2px;line-height:9.2px;font-size:6.6px;color:#f08a40;white-space:nowrap;">五大赛道</div>
<div style="position:absolute;left:88.0px;top:1326.0px;width:148.0px;height:76.8px;background:linear-gradient(180deg,#080c38 0,#0c1460 45%,#1426a8 75%,#080c38 100%)"><div style="position:absolute;left:0;top:0;width:100%;height:50%;background:repeating-linear-gradient(100deg,transparent 0 10px,rgba(230,150,40,.5) 10px 13px,transparent 14px 26px)"></div><div style="position:absolute;left:30%;top:30%;width:40%;height:35%;background:#1a34b0"></div></div>
<div style="position:absolute;left:262.0px;top:1333.2px;width:108.0px;height:69.6px;background:linear-gradient(180deg,#04081a 0,#0a3a9a 14%,#1050c0 50%,#0a1a50 75%,#0a1430 100%)"><div style="position:absolute;left:0;top:0;width:100%;height:70%;background:repeating-linear-gradient(80deg,transparent 0 8px,rgba(80,180,240,.5) 8px 11px,transparent 12px 20px)"></div><div style="position:absolute;left:4%;top:72%;width:92%;height:16%;background:#c8d4e6"></div><div style="position:absolute;right:2%;top:10%;width:8%;height:55%;background:#e0b030"></div></div>
<div style="position:absolute;left:53.6px;top:1460.0px;width:354.4px;height:38.8px;background:#fff"></div>
<div style="position:absolute;left:66.0px;top:1493.2px;width:5.2px;height:5.6px;background:#1f5f68"></div>
<svg style="position:absolute;left:204.0px;top:1510.0px;" width="28.0" height="28.0" viewBox="0 0 7.00 7.00"><path d="M3.500 .6v5.800M.6 3.500h5.800" stroke="#444" stroke-width=".7"/></svg>
<div style="position:absolute;left:596.4px;top:236.0px;width:1644.8px;height:1235.2px;background:#fff;box-shadow:0 0 7px 1px rgba(0,0,0,.16)"></div>
<div style="position:absolute;left:596.4px;top:487.2px;width:1644.8px;height:2.0px;background:#e6e6e6"></div>
<div style="position:absolute;left:640.0px;top:386.0px;width:32.8px;height:102.0px;background:#1f5f68;border-radius:2px 2px 0 0"></div>
<div style="position:absolute;left:640.0px;top:497.2px;width:885.2px;height:71.6px;background:#1f3864"></div>
<div style="position:absolute;left:658.4px;top:509.0px;height:47.6px;line-height:47.6px;font-size:34.0px;color:#fff;white-space:nowrap;">竞赛内容与类别</div>
<div style="position:absolute;left:728.4px;top:601.6px;width:690.8px;height:94.4px;background:#f4913e"></div>
<div style="position:absolute;left:1419.2px;top:601.6px;width:692.0px;height:94.4px;background:#7030a0"></div>
<div style="position:absolute;left:728.4px;top:696.0px;width:1382.8px;height:278.0px;background:#c9e2e5"></div>
<div style="position:absolute;left:727.2px;top:601.6px;width:1385.2px;height:373.6px;border:1.5px solid #6fb8bf;background:transparent"></div>
<div style="position:absolute;left:1418.4px;top:696.0px;width:1.6px;height:278.0px;background:#8cc6cc"></div>
<div style="position:absolute;left:728.4px;top:694.8px;width:1382.8px;height:2.4px;background:#5aa8b0"></div>
<div style="position:absolute;left:728.4px;top:603.4px;height:47.6px;line-height:47.6px;font-size:34.0px;color:#fff;white-space:nowrap;width:690.8px;text-align:center;font-family:'Liberation Serif','Noto Serif CJK SC',serif;font-weight:bold;"><span style="display:inline-block;width:1em;text-align:right">“</span>挑战杯<span style="display:inline-block;width:1em;text-align:left">”</span>课外学术科技竞赛（<span style="display:inline-block;width:1em;text-align:right">“</span>大挑<span style="display:inline-block;width:1em;text-align:left">”</span>）</div>
<div style="position:absolute;left:728.4px;top:645.4px;height:47.6px;line-height:47.6px;font-size:34.0px;color:#fff;white-space:nowrap;width:690.8px;text-align:center;font-family:'Liberation Serif','Noto Serif CJK SC',serif;font-weight:bold;">竞赛内容</div>
<div style="position:absolute;left:1440.0px;top:603.4px;height:47.6px;line-height:47.6px;font-size:34.0px;color:#fff;white-space:nowrap;width:671.2px;text-align:center;font-family:'Liberation Serif','Noto Serif CJK SC',serif;font-weight:bold;"><span style="display:inline-block;width:1em;text-align:right">“</span>挑战杯<span style="display:inline-block;width:1em;text-align:left">”</span>创业赛（<span style="display:inline-block;width:1em;text-align:right">“</span>小挑<span style="display:inline-block;width:1em;text-align:left">”</span>）竞赛内容</div>
<div style="position:absolute;left:741.6px;top:717.1px;height:47.3px;line-height:47.3px;font-size:33.8px;color:#f3975a;white-space:nowrap;">1. 自然科学类学术论文</div>
<div style="position:absolute;left:741.6px;top:809.9px;height:47.3px;line-height:47.3px;font-size:33.8px;color:#f3975a;white-space:nowrap;">2. 哲学社会科学类社会调查报告和学术论文</div>
<div style="position:absolute;left:741.6px;top:902.7px;height:47.3px;line-height:47.3px;font-size:33.8px;color:#f3975a;white-space:nowrap;">3. 科技发明制作A类、B类</div>
<div style="position:absolute;left:1468.0px;top:701.6px;height:46.5px;line-height:46.5px;font-size:33.2px;color:#f3975a;white-space:nowrap;">五大赛道</div>
<svg style="position:absolute;left:741.6px;top:1003.2px;" width="693.6" height="351.6" viewBox="0 0 173 88"><defs><linearGradient id="p1bg" x1="0" y1="0" x2="0" y2="1"><stop offset="0" stop-color="#080b3c"/><stop offset=".2" stop-color="#0a0f50"/><stop offset=".6" stop-color="#0e1878"/><stop offset=".85" stop-color="#1828c8"/><stop offset=".93" stop-color="#0c1258"/><stop offset="1" stop-color="#080a38"/></linearGradient>
<linearGradient id="bm" gradientUnits="userSpaceOnUse" x1="0" y1="24" x2="0" y2="0"><stop offset="0" stop-color="#ffd848" stop-opacity="1"/><stop offset=".5" stop-color="#ffa428" stop-opacity=".9"/><stop offset="1" stop-color="#f07a20" stop-opacity=".5"/></linearGradient>
<radialGradient id="scr" cx=".5" cy=".55" r=".6"><stop offset="0" stop-color="#1a2cb8"/><stop offset="1" stop-color="#0c1678"/></radialGradient>
<filter id="pb" x="-5%" y="-5%" width="110%" height="110%"><feGaussianBlur stdDeviation=".75"/></filter></defs>
<rect width="173" height="88" fill="url(#p1bg)"/>
<g filter="url(#pb)">
<rect x="4" y="19" width="26" height="54" fill="#0a1058"/><rect x="143" y="19" width="26" height="54" fill="#0a1058"/>
<circle cx="14.5" cy="29.2" r=".45" fill="#5a78e0" opacity=".55"/><circle cx="158.0" cy="25.5" r=".45" fill="#5a78e0" opacity=".55"/><circle cx="18.7" cy="39.6" r=".45" fill="#5a78e0" opacity=".55"/><circle cx="146.2" cy="46.4" r=".45" fill="#5a78e0" opacity=".55"/><circle cx="8.7" cy="42.8" r=".45" fill="#5a78e0" opacity=".55"/><circle cx="146.4" cy="26.4" r=".45" fill="#5a78e0" opacity=".55"/><circle cx="16.5" cy="61.7" r=".45" fill="#5a78e0" opacity=".55"/><circle cx="147.5" cy="32.7" r=".45" fill="#5a78e0" opacity=".55"/><circle cx="20.5" cy="67.5" r=".45" fill="#5a78e0" opacity=".55"/><circle cx="156.5" cy="41.0" r=".45" fill="#5a78e0" opacity=".55"/><circle cx="27.5" cy="24.2" r=".45" fill="#5a78e0" opacity=".55"/><circle cx="162.2" cy="35.9" r=".45" fill="#5a78e0" opacity=".55"/><circle cx="10.9" cy="27.7" r=".45" fill="#5a78e0" opacity=".55"/><circle cx="151.2" cy="61.2" r=".45" fill="#5a78e0" opacity=".55"/><circle cx="11.6" cy="49.9" r=".45" fill="#5a78e0" opacity=".55"/><circle cx="157.8" cy="39.9" r=".45" fill="#5a78e0" opacity=".55"/><circle cx="19.0" cy="25.0" r=".45" fill="#5a78e0" opacity=".55"/><circle cx="146.2" cy="31.9" r=".45" fill="#5a78e0" opacity=".55"/><circle cx="21.6" cy="42.5" r=".45" fill="#5a78e0" opacity=".55"/><circle cx="151.3" cy="50.1" r=".45" fill="#5a78e0" opacity=".55"/><circle cx="17.1" cy="36.4" r=".45" fill="#5a78e0" opacity=".55"/><circle cx="160.9" cy="55.6" r=".45" fill="#5a78e0" opacity=".55"/><circle cx="12.9" cy="49.6" r=".45" fill="#5a78e0" opacity=".55"/><circle cx="155.5" cy="64.0" r=".45" fill="#5a78e0" opacity=".55"/><circle cx="22.6" cy="35.8" r=".45" fill="#5a78e0" opacity=".55"/><circle cx="164.6" cy="27.7" r=".45" fill="#5a78e0" opacity=".55"/><circle cx="16.4" cy="58.3" r=".45" fill="#5a78e0" opacity=".55"/><circle cx="148.0" cy="45.5" r=".45" fill="#5a78e0" opacity=".55"/><circle cx="8.8" cy="54.1" r=".45" fill="#5a78e0" opacity=".55"/><circle cx="160.3" cy="49.5" r=".45" fill="#5a78e0" opacity=".55"/><circle cx="25.5" cy="37.1" r=".45" fill="#5a78e0" opacity=".55"/><circle cx="158.9" cy="50.5" r=".45" fill="#5a78e0" opacity=".55"/><circle cx="19.6" cy="43.9" r=".45" fill="#5a78e0" opacity=".55"/><circle cx="161.8" cy="67.3" r=".45" fill="#5a78e0" opacity=".55"/><circle cx="17.5" cy="53.9" r=".45" fill="#5a78e0" opacity=".55"/><circle cx="146.2" cy="55.7" r=".45" fill="#5a78e0" opacity=".55"/><circle cx="20.9" cy="69.7" r=".45" fill="#5a78e0" opacity=".55"/><circle cx="161.4" cy="35.7" r=".45" fill="#5a78e0" opacity=".55"/><circle cx="15.7" cy="54.1" r=".45" fill="#5a78e0" opacity=".55"/><circle cx="145.5" cy="44.2" r=".45" fill="#5a78e0" opacity=".55"/><circle cx="11.4" cy="27.6" r=".45" fill="#5a78e0" opacity=".55"/><circle cx="146.2" cy="58.9" r=".45" fill="#5a78e0" opacity=".55"/><circle cx="10.6" cy="33.9" r=".45" fill="#5a78e0" opacity=".55"/><circle cx="152.8" cy="63.8" r=".45" fill="#5a78e0" opacity=".55"/><circle cx="9.6" cy="43.6" r=".45" fill="#5a78e0" opacity=".55"/><circle cx="156.0" cy="64.4" r=".45" fill="#5a78e0" opacity=".55"/><circle cx="24.4" cy="63.5" r=".45" fill="#5a78e0" opacity=".55"/><circle cx="150.6" cy="41.9" r=".45" fill="#5a78e0" opacity=".55"/><circle cx="15.2" cy="64.4" r=".45" fill="#5a78e0" opacity=".55"/><circle cx="164.2" cy="29.2" r=".45" fill="#5a78e0" opacity=".55"/><circle cx="11.5" cy="33.1" r=".45" fill="#5a78e0" opacity=".55"/><circle cx="149.7" cy="45.3" r=".45" fill="#5a78e0" opacity=".55"/>
<rect x="30" y="25" width="113" height="38" fill="url(#scr)"/>
<rect x="30" y="12" width="113" height="13" fill="#0a0e50"/>
<rect x="36" y="15.5" width="2.400" height="1.200" fill="#8fb0ff"/><rect x="46" y="15.5" width="2.400" height="1.200" fill="#8fb0ff"/><rect x="56" y="15.5" width="2.400" height="1.200" fill="#8fb0ff"/><rect x="66" y="15.5" width="2.400" height="1.200" fill="#8fb0ff"/><rect x="76" y="15.5" width="2.400" height="1.200" fill="#8fb0ff"/><rect x="86" y="15.5" width="2.400" height="1.200" fill="#8fb0ff"/><rect x="96" y="15.5" width="2.400" height="1.200" fill="#8fb0ff"/><rect x="106" y="15.5" width="2.400" height="1.200" fill="#8fb0ff"/><rect x="116" y="15.5" width="2.400" height="1.200" fill="#8fb0ff"/><rect x="126" y="15.5" width="2.400" height="1.200" fill="#8fb0ff"/><rect x="136" y="15.5" width="2.400" height="1.200" fill="#8fb0ff"/><rect x="41" y="18.5" width="2.400" height="1.200" fill="#8fb0ff"/><rect x="51" y="18.5" width="2.400" height="1.200" fill="#8fb0ff"/><rect x="61" y="18.5" width="2.400" height="1.200" fill="#8fb0ff"/><rect x="71" y="18.5" width="2.400" height="1.200" fill="#8fb0ff"/><rect x="81" y="18.5" width="2.400" height="1.200" fill="#8fb0ff"/><rect x="91" y="18.5" width="2.400" height="1.200" fill="#8fb0ff"/><rect x="101" y="18.5" width="2.400" height="1.200" fill="#8fb0ff"/><rect x="111" y="18.5" width="2.400" height="1.200" fill="#8fb0ff"/><rect x="121" y="18.5" width="2.400" height="1.200" fill="#8fb0ff"/><rect x="131" y="18.5" width="2.400" height="1.200" fill="#8fb0ff"/><rect x="46" y="21.5" width="2.400" height="1.200" fill="#8fb0ff"/><rect x="56" y="21.5" width="2.400" height="1.200" fill="#8fb0ff"/><rect x="66" y="21.5" width="2.400" height="1.200" fill="#8fb0ff"/><rect x="76" y="21.5" width="2.400" height="1.200" fill="#8fb0ff"/><rect x="86" y="21.5" width="2.400" height="1.200" fill="#8fb0ff"/><rect x="96" y="21.5" width="2.400" height="1.200" fill="#8fb0ff"/><rect x="106" y="21.5" width="2.400" height="1.200" fill="#8fb0ff"/><rect x="116" y="21.5" width="2.400" height="1.200" fill="#8fb0ff"/><rect x="126" y="21.5" width="2.400" height="1.200" fill="#8fb0ff"/><circle cx="96.4" cy="36.9" r=".4" fill="#7a96f0" opacity=".45"/><circle cx="34.4" cy="42.2" r=".4" fill="#7a96f0" opacity=".45"/><circle cx="73.1" cy="47.3" r=".4" fill="#7a96f0" opacity=".45"/><circle cx="135.0" cy="51.5" r=".4" fill="#7a96f0" opacity=".45"/><circle cx="88.6" cy="49.0" r=".4" fill="#7a96f0" opacity=".45"/><circle cx="105.7" cy="29.8" r=".4" fill="#7a96f0" opacity=".45"/><circle cx="129.4" cy="54.5" r=".4" fill="#7a96f0" opacity=".45"/><circle cx="126.7" cy="55.1" r=".4" fill="#7a96f0" opacity=".45"/><circle cx="75.6" cy="41.6" r=".4" fill="#7a96f0" opacity=".45"/><circle cx="45.0" cy="49.6" r=".4" fill="#7a96f0" opacity=".45"/><circle cx="40.6" cy="30.3" r=".4" fill="#7a96f0" opacity=".45"/><circle cx="56.1" cy="33.5" r=".4" fill="#7a96f0" opacity=".45"/><circle cx="70.0" cy="29.8" r=".4" fill="#7a96f0" opacity=".45"/><circle cx="34.0" cy="33.1" r=".4" fill="#7a96f0" opacity=".45"/><circle cx="44.8" cy="40.4" r=".4" fill="#7a96f0" opacity=".45"/><circle cx="36.7" cy="57.7" r=".4" fill="#7a96f0" opacity=".45"/><circle cx="99.1" cy="33.1" r=".4" fill="#7a96f0" opacity=".45"/><circle cx="60.7" cy="39.8" r=".4" fill="#7a96f0" opacity=".45"/><circle cx="72.6" cy="32.2" r=".4" fill="#7a96f0" opacity=".45"/><circle cx="124.0" cy="61.8" r=".4" fill="#7a96f0" opacity=".45"/><circle cx="83.4" cy="44.5" r=".4" fill="#7a96f0" opacity=".45"/><circle cx="43.1" cy="31.5" r=".4" fill="#7a96f0" opacity=".45"/><circle cx="70.3" cy="37.0" r=".4" fill="#7a96f0" opacity=".45"/><circle cx="121.9" cy="33.5" r=".4" fill="#7a96f0" opacity=".45"/><circle cx="36.4" cy="60.3" r=".4" fill="#7a96f0" opacity=".45"/><circle cx="90.0" cy="33.0" r=".4" fill="#7a96f0" opacity=".45"/><circle cx="91.6" cy="28.9" r=".4" fill="#7a96f0" opacity=".45"/><circle cx="90.0" cy="61.3" r=".4" fill="#7a96f0" opacity=".45"/><circle cx="125.5" cy="51.7" r=".4" fill="#7a96f0" opacity=".45"/><circle cx="61.7" cy="40.5" r=".4" fill="#7a96f0" opacity=".45"/><circle cx="51.7" cy="54.2" r=".4" fill="#7a96f0" opacity=".45"/><circle cx="90.5" cy="54.5" r=".4" fill="#7a96f0" opacity=".45"/><circle cx="68.9" cy="35.6" r=".4" fill="#7a96f0" opacity=".45"/><circle cx="120.0" cy="61.5" r=".4" fill="#7a96f0" opacity=".45"/><circle cx="124.4" cy="55.4" r=".4" fill="#7a96f0" opacity=".45"/><circle cx="120.7" cy="53.2" r=".4" fill="#7a96f0" opacity=".45"/><circle cx="58.0" cy="45.6" r=".4" fill="#7a96f0" opacity=".45"/><circle cx="71.7" cy="29.0" r=".4" fill="#7a96f0" opacity=".45"/><circle cx="37.0" cy="37.5" r=".4" fill="#7a96f0" opacity=".45"/><circle cx="61.5" cy="51.5" r=".4" fill="#7a96f0" opacity=".45"/>
<ellipse cx="90" cy="55" rx="44" ry="6.500" fill="#2a58e0" opacity=".4"/><ellipse cx="104" cy="54" rx="26" ry="3" fill="#6a9af8" opacity=".3"/>
<path d="M21 15L5 0h-5v3z" fill="url(#bm)"/><path d="M26 15.500L58 0h10z" fill="url(#bm)"/><path d="M81 24L62 0h12z" fill="url(#bm)" opacity=".9"/><path d="M90 24.500L96 0h12z" fill="url(#bm)" opacity=".9"/>
<path d="M137 15.500L100 0h12z" fill="url(#bm)"/><path d="M146 15L152 0h10z" fill="url(#bm)"/><path d="M168 13l5-4v5z" fill="url(#bm)"/>
<path d="M0 10.500l24 5.500M28 17l50 8M94 25l50-8M148 16l25-6" stroke="#f0a030" stroke-width="1.300" opacity=".75"/>
<g fill="#fff2b0"><circle cx="21" cy="15.500" r="1.500"/><circle cx="26.500" cy="16" r="1.500"/><circle cx="81.500" cy="24.500" r="1.600"/><circle cx="90" cy="24.800" r="1.600"/><circle cx="137" cy="16" r="1.500"/><circle cx="146" cy="15.500" r="1.500"/></g>
<rect x="48" y="28" width="6" height="4" fill="#e8203a"/><rect x="48" y="31" width="24" height="3.200" fill="#e4eaff" opacity=".85"/><rect x="75" y="30.500" width="20" height="3.800" fill="#ffffff" opacity=".9"/><rect x="97" y="31.500" width="22" height="2.800" fill="#dde6ff" opacity=".85"/>
<rect x="49" y="36.800" width="70" height="2" fill="#dfe8ff" opacity=".8"/><rect x="52" y="40.800" width="64" height="1.800" fill="#d0dcff" opacity=".8"/>
<rect x="49" y="48" width="70" height="1.300" fill="#9ab2f4" opacity=".9"/><rect x="78" y="52" width="10" height="1.600" fill="#aec2f8"/>
<rect x="50" y="61" width="66" height="4.500" fill="#2a5af0"/><rect x="56" y="66" width="58" height="3" fill="#1a30c0"/>
<rect x="0" y="71" width="173" height="9" fill="#1c34e0" opacity=".75"/>
<ellipse cx="47" cy="74.500" rx="10" ry="2.200" fill="#3a7af4" opacity=".8"/>
<rect x="44" y="66" width="6.500" height="11" fill="#4aa6ee"/><rect x="46" y="62.500" width="1.600" height="4" fill="#9ad0ff"/>
<rect x="0" y="81" width="173" height="7" fill="#090b3a"/></g></svg>
<svg style="position:absolute;left:1558.4px;top:1023.2px;" width="509.2" height="334.0" viewBox="0 0 127 84"><defs><linearGradient id="p2bg" x1="0" y1="0" x2="0" y2="1"><stop offset="0" stop-color="#08207c"/><stop offset=".5" stop-color="#0c3aae"/><stop offset="1" stop-color="#081e70"/></linearGradient>
<linearGradient id="gold" x1="0" y1="0" x2="1" y2="0"><stop offset="0" stop-color="#8a6a10"/><stop offset=".4" stop-color="#f2d84a"/><stop offset=".7" stop-color="#c89a20"/><stop offset="1" stop-color="#7a5a10"/></linearGradient>
<clipPath id="scrc"><rect x="10" y="8" width="117" height="56"/></clipPath>
<filter id="pb2" x="-5%" y="-5%" width="110%" height="110%"><feGaussianBlur stdDeviation=".65"/></filter></defs>
<rect width="127" height="84" fill="#04060c"/>
<g filter="url(#pb2)">
<rect x="10" y="8" width="117" height="58" fill="url(#p2bg)"/>
<g clip-path="url(#scrc)"><path d="M42.2 62L-33.1 24.4L-19.6 24.4L46.4 62z" fill="#4ab4f4" opacity="0.5"/><path d="M45.8 62L-21.8 15.0L-13.5 15.0L48.4 62z" fill="#2070d8" opacity="0.35"/><path d="M47.8 62L-14.4 6.4L-0.9 6.4L52.0 62z" fill="#4ab4f4" opacity="0.5"/><path d="M51.4 62L-0.7 -1.0L7.6 -1.0L54.0 62z" fill="#2070d8" opacity="0.35"/><path d="M53.4 62L8.8 -7.3L22.2 -7.3L57.6 62z" fill="#4ab4f4" opacity="0.5"/><path d="M57.0 62L24.2 -12.2L32.5 -12.2L59.6 62z" fill="#2070d8" opacity="0.35"/><path d="M59.0 62L35.0 -15.6L48.5 -15.6L63.2 62z" fill="#4ab4f4" opacity="0.5"/><path d="M62.6 62L51.4 -17.6L59.7 -17.6L65.2 62z" fill="#2070d8" opacity="0.35"/><path d="M64.6 62L62.8 -18.0L76.2 -18.0L68.8 62z" fill="#4ab4f4" opacity="0.5"/><path d="M68.2 62L79.2 -16.8L87.6 -16.8L70.8 62z" fill="#2070d8" opacity="0.35"/><path d="M70.2 62L90.3 -14.1L103.7 -14.1L74.4 62z" fill="#4ab4f4" opacity="0.5"/><path d="M73.8 62L106.0 -9.9L114.3 -9.9L76.4 62z" fill="#2070d8" opacity="0.35"/><path d="M75.8 62L115.9 -4.3L129.4 -4.3L80.0 62z" fill="#4ab4f4" opacity="0.5"/><path d="M79.4 62L130.1 2.5L138.4 2.5L82.0 62z" fill="#2070d8" opacity="0.35"/><path d="M81.4 62L138.1 10.6L151.5 10.6L85.6 62z" fill="#4ab4f4" opacity="0.5"/><path d="M85.0 62L150.0 19.6L158.3 19.6L87.6 62z" fill="#2070d8" opacity="0.35"/></g>
<g fill="#7a8ab0"><circle cx="14" cy="2" r=".6"/><circle cx="22" cy="2.500" r=".6"/><circle cx="27" cy="2" r=".5"/><circle cx="52" cy="2.500" r=".6"/><circle cx="59" cy="2" r=".5"/><circle cx="84" cy="2.500" r=".6"/><circle cx="90" cy="2" r=".5"/><circle cx="115" cy="2.500" r=".6"/><circle cx="122" cy="2" r=".5"/></g>
<rect x="0" y="8" width="10" height="46" fill="#0a0e18"/><path d="M0 22l10 3M0 30l10-2" stroke="#2a3040" stroke-width=".6"/>
<rect x="26" y="24" width="68" height="34" fill="#6a96d8" opacity=".35"/><rect x="26" y="24" width="68" height="34" fill="none" stroke="#9ac0f4" stroke-width=".4" opacity=".7"/>
<rect x="25" y="13.600" width="70" height="2.400" fill="#e8c82a"/><rect x="25" y="13.600" width="70" height="2.400" fill="none"/><rect x="56" y="19" width="9" height="4" fill="#f0d030"/>
<rect x="29" y="27.00" width="14" height="1.300" fill="#0a1a50" opacity=".85"/><rect x="47" y="27.00" width="26" height="1.300" fill="#0a1a50" opacity=".85"/><rect x="29" y="29.85" width="14" height="1.300" fill="#0a1a50" opacity=".85"/><rect x="47" y="29.85" width="22" height="1.300" fill="#0a1a50" opacity=".85"/><rect x="29" y="32.70" width="15" height="1.300" fill="#0a1a50" opacity=".85"/><rect x="47" y="32.70" width="30" height="1.300" fill="#0a1a50" opacity=".85"/><rect x="29" y="35.55" width="14" height="1.300" fill="#0a1a50" opacity=".85"/><rect x="47" y="35.55" width="34" height="1.300" fill="#0a1a50" opacity=".85"/><rect x="29" y="38.40" width="14" height="1.300" fill="#0a1a50" opacity=".85"/><rect x="47" y="38.40" width="28" height="1.300" fill="#0a1a50" opacity=".85"/><rect x="29" y="41.25" width="14" height="1.300" fill="#0a1a50" opacity=".85"/><rect x="47" y="41.25" width="32" height="1.300" fill="#0a1a50" opacity=".85"/><rect x="29" y="44.10" width="10" height="1.300" fill="#0a1a50" opacity=".85"/><rect x="47" y="44.10" width="18" height="1.300" fill="#0a1a50" opacity=".85"/><rect x="29" y="46.95" width="14" height="1.300" fill="#0a1a50" opacity=".85"/><rect x="47" y="46.95" width="27" height="1.300" fill="#0a1a50" opacity=".85"/><rect x="29" y="49.80" width="14" height="1.300" fill="#0a1a50" opacity=".85"/><rect x="47" y="49.80" width="46" height="1.300" fill="#0a1a50" opacity=".85"/><rect x="29" y="52.65" width="14" height="1.300" fill="#0a1a50" opacity=".85"/><rect x="47" y="52.65" width="34" height="1.300" fill="#0a1a50" opacity=".85"/>
<path d="M112 21l10 0 -1.500 38h-7z" fill="url(#gold)"/><path d="M113 17c3-3 8-3 10 1l-1 8c-3-2-6-2-9 0z" fill="#3a8a3a"/><path d="M120 16c2 1 3 3 2.500 7l-2 3z" fill="#d8302a"/><rect x="111" y="58" width="13" height="4" fill="#6a5010"/>
<path d="M6 54c1-2 4-2 5 0l-1.500 10h-2.500z" fill="#f08a18"/><circle cx="8.500" cy="52.500" r="2" fill="#b89a30"/>
<rect x="0" y="64" width="127" height="20" fill="#0a1e68"/><rect x="0" y="64" width="12" height="12" fill="#1a50d0"/><path d="M0 76l14-3v11H0z" fill="#9aa6c0" opacity=".6"/>
<rect x="11.00" y="60.50" width="2.200" height="2.400" rx="1" fill="#c8a890"/><rect x="10.30" y="62.80" width="3.700" height="13" fill="#10131f"/><rect x="10.60" y="67.00" width="3.300" height="2.600" fill="#f4f6fa"/><rect x="15.55" y="61.00" width="2.200" height="2.400" rx="1" fill="#c8a890"/><rect x="14.85" y="63.20" width="3.700" height="13" fill="#10131f"/><rect x="15.15" y="67.80" width="3.300" height="2.600" fill="#f4f6fa"/><rect x="20.10" y="61.50" width="2.200" height="2.400" rx="1" fill="#c8a890"/><rect x="19.40" y="63.60" width="3.700" height="13" fill="#10131f"/><rect x="19.70" y="67.00" width="3.300" height="2.600" fill="#f4f6fa"/><rect x="24.65" y="60.50" width="2.200" height="2.400" rx="1" fill="#c8a890"/><rect x="23.95" y="62.80" width="3.700" height="13" fill="#10131f"/><rect x="24.25" y="67.80" width="3.300" height="2.600" fill="#f4f6fa"/><rect x="29.20" y="61.00" width="2.200" height="2.400" rx="1" fill="#c8a890"/><rect x="28.50" y="63.20" width="3.700" height="13" fill="#10131f"/><rect x="28.80" y="67.00" width="3.300" height="2.600" fill="#f4f6fa"/><rect x="33.75" y="61.50" width="2.200" height="2.400" rx="1" fill="#c8a890"/><rect x="33.05" y="63.60" width="3.700" height="13" fill="#10131f"/><rect x="33.35" y="67.80" width="3.300" height="2.600" fill="#f4f6fa"/><rect x="38.30" y="60.50" width="2.200" height="2.400" rx="1" fill="#c8a890"/><rect x="37.60" y="62.80" width="3.700" height="13" fill="#10131f"/><rect x="37.90" y="67.00" width="3.300" height="2.600" fill="#f4f6fa"/><rect x="42.85" y="61.00" width="2.200" height="2.400" rx="1" fill="#c8a890"/><rect x="42.15" y="63.20" width="3.700" height="13" fill="#10131f"/><rect x="42.45" y="67.80" width="3.300" height="2.600" fill="#f4f6fa"/><rect x="47.40" y="61.50" width="2.200" height="2.400" rx="1" fill="#c8a890"/><rect x="46.70" y="63.60" width="3.700" height="13" fill="#10131f"/><rect x="47.00" y="67.00" width="3.300" height="2.600" fill="#f4f6fa"/><rect x="51.95" y="60.50" width="2.200" height="2.400" rx="1" fill="#c8a890"/><rect x="51.25" y="62.80" width="3.700" height="13" fill="#10131f"/><rect x="51.55" y="67.80" width="3.300" height="2.600" fill="#f4f6fa"/><rect x="56.50" y="61.00" width="2.200" height="2.400" rx="1" fill="#c8a890"/><rect x="55.80" y="63.20" width="3.700" height="13" fill="#10131f"/><rect x="56.10" y="67.00" width="3.300" height="2.600" fill="#f4f6fa"/><rect x="61.05" y="61.50" width="2.200" height="2.400" rx="1" fill="#c8a890"/><rect x="60.35" y="63.60" width="3.700" height="13" fill="#10131f"/><rect x="60.65" y="67.80" width="3.300" height="2.600" fill="#f4f6fa"/><rect x="65.60" y="60.50" width="2.200" height="2.400" rx="1" fill="#c8a890"/><rect x="64.90" y="62.80" width="3.700" height="13" fill="#10131f"/><rect x="65.20" y="67.00" width="3.300" height="2.600" fill="#f4f6fa"/><rect x="70.15" y="61.00" width="2.200" height="2.400" rx="1" fill="#c8a890"/><rect x="69.45" y="63.20" width="3.700" height="13" fill="#10131f"/><rect x="69.75" y="67.80" width="3.300" height="2.600" fill="#f4f6fa"/><rect x="74.70" y="61.50" width="2.200" height="2.400" rx="1" fill="#c8a890"/><rect x="74.00" y="63.60" width="3.700" height="13" fill="#10131f"/><rect x="74.30" y="67.00" width="3.300" height="2.600" fill="#f4f6fa"/><rect x="79.25" y="60.50" width="2.200" height="2.400" rx="1" fill="#c8a890"/><rect x="78.55" y="62.80" width="3.700" height="13" fill="#10131f"/><rect x="78.85" y="67.80" width="3.300" height="2.600" fill="#f4f6fa"/><rect x="83.80" y="61.00" width="2.200" height="2.400" rx="1" fill="#c8a890"/><rect x="83.10" y="63.20" width="3.700" height="13" fill="#10131f"/><rect x="83.40" y="67.00" width="3.300" height="2.600" fill="#f4f6fa"/><rect x="88.35" y="61.50" width="2.200" height="2.400" rx="1" fill="#c8a890"/><rect x="87.65" y="63.60" width="3.700" height="13" fill="#10131f"/><rect x="87.95" y="67.80" width="3.300" height="2.600" fill="#f4f6fa"/><rect x="92.90" y="60.50" width="2.200" height="2.400" rx="1" fill="#c8a890"/><rect x="92.20" y="62.80" width="3.700" height="13" fill="#10131f"/><rect x="92.50" y="67.00" width="3.300" height="2.600" fill="#f4f6fa"/><rect x="97.45" y="61.00" width="2.200" height="2.400" rx="1" fill="#c8a890"/><rect x="96.75" y="63.20" width="3.700" height="13" fill="#10131f"/><rect x="97.05" y="67.80" width="3.300" height="2.600" fill="#f4f6fa"/><rect x="102.00" y="61.50" width="2.200" height="2.400" rx="1" fill="#c8a890"/><rect x="101.30" y="63.60" width="3.700" height="13" fill="#10131f"/><rect x="101.60" y="67.00" width="3.300" height="2.600" fill="#f4f6fa"/><rect x="106.55" y="60.50" width="2.200" height="2.400" rx="1" fill="#c8a890"/><rect x="105.85" y="62.80" width="3.700" height="13" fill="#10131f"/><rect x="106.15" y="67.80" width="3.300" height="2.600" fill="#f4f6fa"/><rect x="111.10" y="61.00" width="2.200" height="2.400" rx="1" fill="#c8a890"/><rect x="110.40" y="63.20" width="3.700" height="13" fill="#10131f"/><rect x="110.70" y="67.00" width="3.300" height="2.600" fill="#f4f6fa"/><rect x="115.65" y="61.50" width="2.200" height="2.400" rx="1" fill="#c8a890"/><rect x="114.95" y="63.60" width="3.700" height="13" fill="#10131f"/><rect x="115.25" y="67.80" width="3.300" height="2.600" fill="#f4f6fa"/><rect x="120.20" y="60.50" width="2.200" height="2.400" rx="1" fill="#c8a890"/><rect x="119.50" y="62.80" width="3.700" height="13" fill="#10131f"/><rect x="119.80" y="67.00" width="3.300" height="2.600" fill="#f4f6fa"/>
<rect x="10" y="75.500" width="117" height="6" fill="#0a1a60" opacity=".75"/><path d="M10 78.500h117" stroke="#2a5ad0" stroke-width="4" stroke-dasharray="2 2.500" opacity=".6"/>
<rect x="0" y="82" width="127" height="2" fill="#081440"/></g></svg>
<div style="position:absolute;left:1156.0px;top:1377.2px;width:524.0px;height:70.4px;border:2.500px dotted #b8b8b8"></div>
<div style="position:absolute;left:1156.0px;top:1394.6px;height:34.7px;line-height:34.7px;font-size:24.8px;color:#8a8a8a;white-space:nowrap;width:524.0px;text-align:center;">页脚区</div>
<div style="position:absolute;left:2134.0px;top:1406.7px;height:14.6px;line-height:14.6px;font-size:10.4px;color:#777;white-space:nowrap;">4</div>
<svg style="position:absolute;left:2316.0px;top:792.0px;" width="28.0" height="40.0" viewBox="0 0 7.00 10.00"><path d="M1 .8v6.400l1.500-1.300 1.100 2.400.9-.4-1.100-2.300h1.900z" fill="#111" stroke="#fff" stroke-width=".3"/><path d="M4.700 6.200h1.400M5.400 6.200v2.400" stroke="#111" stroke-width=".5"/></svg>
<div style="position:absolute;left:2474.0px;top:204.0px;width:24.4px;height:1284.0px;background:#ecedf1"></div>
<div style="position:absolute;left:2477.2px;top:392.0px;width:16.0px;height:63.2px;background:#d0d3d9;border-radius:3px"></div>
<div style="position:absolute;left:2479.2px;top:215.9px;height:14.6px;line-height:14.6px;font-size:10.4px;color:#666;white-space:nowrap;">▴</div>
<div style="position:absolute;left:2479.2px;top:1403.1px;height:14.6px;line-height:14.6px;font-size:10.4px;color:#555;white-space:nowrap;">▴</div>
<div style="position:absolute;left:2479.2px;top:1430.7px;height:14.6px;line-height:14.6px;font-size:10.4px;color:#555;white-space:nowrap;">⇞</div>
<div style="position:absolute;left:2479.2px;top:1458.7px;height:14.6px;line-height:14.6px;font-size:10.4px;color:#555;white-space:nowrap;">▾</div>
<div style="position:absolute;left:2498.4px;top:204.0px;width:401.6px;height:1344.0px;background:#f6f7f9"></div>
<div style="position:absolute;left:2518.0px;top:213.7px;height:24.6px;line-height:24.6px;font-size:17.6px;color:#333;white-space:nowrap;">云字体 ▾</div>
<svg style="position:absolute;left:2750.0px;top:214.0px;" width="28.0" height="24.0" viewBox="0 0 7.00 6.00"><circle cx="3.400" cy="2.800" r="2.300" stroke="#555" stroke-width=".5" fill="none"/><path d="M2 4.600l-.6 1.200 1.800-.7" stroke="#555" stroke-width=".5" fill="none"/></svg>
<svg style="position:absolute;left:2788.0px;top:214.0px;" width="28.0" height="24.0" viewBox="0 0 7.00 6.00"><circle cx="3.400" cy="3" r="2.400" stroke="#555" stroke-width=".5" fill="none"/><path d="M2.300 3.600c.6.800 1.600.800 2.200 0M2.600 2.300v.2M4.200 2.300v.2" stroke="#555" stroke-width=".5" fill="none"/></svg>
<svg style="position:absolute;left:2828.0px;top:214.0px;" width="28.0" height="24.0" viewBox="0 0 7.00 6.00"><path d="M3.400.8v4.400M1.800 2l1.600-1.400 1.600 1.400M1.400 5.400h4" stroke="#555" stroke-width=".5" fill="none"/></svg>
<svg style="position:absolute;left:2866.0px;top:216.0px;" width="24.0" height="22.0" viewBox="0 0 6.00 5.50"><path d="M1 1l3.600 3.600M4.600 1L1 4.600" stroke="#333" stroke-width=".6"/></svg>
<div style="position:absolute;left:2518.0px;top:257.9px;height:21.8px;line-height:21.8px;font-size:15.6px;color:#3a7ae0;white-space:nowrap;">了解更多云字体及开通会员权益</div>
<div style="position:absolute;left:2518.0px;top:306.3px;height:25.8px;line-height:25.8px;font-size:18.4px;color:#333;white-space:nowrap;">云端内容字体</div>
<div style="position:absolute;left:2516.0px;top:344.0px;width:366.8px;height:148.8px;background:#fff;border-radius:3px"></div>
<div style="position:absolute;left:2534.0px;top:363.1px;height:25.8px;line-height:25.8px;font-size:18.4px;color:#222;white-space:nowrap;">楷体_GB2312</div>
<div style="position:absolute;left:2534.0px;top:401.8px;height:25.2px;line-height:25.2px;font-size:18.0px;color:#999;white-space:nowrap;">字体描述文字示意</div>
<div style="position:absolute;left:2534.0px;top:432.8px;height:33.6px;line-height:33.6px;font-size:24.0px;color:#333;white-space:nowrap;font-family:'Liberation Serif','Noto Serif CJK SC',serif;letter-spacing:1.200px">方正楷体  GB2312</div>
<div style="position:absolute;left:2829.2px;top:442.4px;width:21.6px;height:21.6px;background:#f26a1c;border-radius:50%"><div style="position:absolute;left:34%;top:30%;width:32%;height:40%;background:#fff;border-radius:2px"></div></div>
<div style="position:absolute;left:2516.0px;top:529.6px;width:364.0px;height:44.8px;background:#fb4e36"></div>
<div style="position:absolute;left:2516.0px;top:538.0px;height:29.7px;line-height:29.7px;font-size:21.2px;color:#fff;white-space:nowrap;width:364.0px;text-align:center;">开通会员后下载（1）</div>
<div style="position:absolute;left:2518.0px;top:589.6px;width:22.0px;height:22.4px;background:#f04a3a;border-radius:50%"><div style="position:absolute;left:30%;top:28%;width:40%;height:44%;background:#fff;border-radius:2px"></div></div>
<div style="position:absolute;left:2546.0px;top:589.7px;height:22.1px;line-height:22.1px;font-size:15.8px;color:#555;white-space:nowrap;">检测到演示文稿有缺失字体，请开通会员后补齐</div>
<div style="position:absolute;left:2900.0px;top:204.0px;width:69.2px;height:1344.0px;background:#f6f7f9;border-left:2px solid #eceef1"></div>
<svg style="position:absolute;left:2920.0px;top:254.0px;" width="28.0" height="28.0" viewBox="0 0 7.00 7.00"><path d="M1.400 3.600l4.400-2v5l-4.400-1.400zM2.600 5.400l.6 1.800" stroke="#666" stroke-width=".6" fill="none"/></svg>
<svg style="position:absolute;left:2920.0px;top:314.0px;" width="28.0" height="28.0" viewBox="0 0 7.00 7.00"><path d="M1.200 2.400h3.600M1.200 4.600h4.600M4 1.600l1 0.800-1 .8M5 3.800l1 .8-1 .8" stroke="#666" stroke-width=".6" fill="none"/></svg>
<svg style="position:absolute;left:2920.0px;top:368.0px;" width="28.0" height="28.0" viewBox="0 0 7.00 7.00"><path d="M3.500 1l1.400 2.400-1.400 1-1.400-1zM1.600 5.200l1.900-.8 1.900.8-1.900 1z" stroke="#666" stroke-width=".55" fill="none"/></svg>
<svg style="position:absolute;left:2920.0px;top:424.0px;" width="28.0" height="28.0" viewBox="0 0 7.00 7.00"><path d="M1.200 1.600h4.600v2.600h-4.600zM2.400 5.600h2.200M3.500 4.200v1.400M.8 2.900h5.400" stroke="#555" stroke-width=".6" fill="none"/></svg>
<svg style="position:absolute;left:2920.0px;top:478.0px;" width="28.0" height="28.0" viewBox="0 0 7.00 7.00"><path d="M2 1.800a2.400 2.400 0 1 1-.6 2.400M2.200.6l-.4 1.400 1.400.3" stroke="#666" stroke-width=".6" fill="none"/></svg>
<svg style="position:absolute;left:2920.0px;top:534.0px;" width="28.0" height="28.0" viewBox="0 0 7.00 7.00"><path d="M1.400 3.200c0-2.400 4.200-2.400 4.200 0v2.400h-1.400v-2M1.400 3.400v2h1.400v-1.600" stroke="#666" stroke-width=".6" fill="none"/></svg>
<svg style="position:absolute;left:2920.0px;top:588.0px;" width="28.0" height="28.0" viewBox="0 0 7.00 7.00"><path d="M1 3.500c1.400-2 3.600-2 5 0-1.400 2-3.600 2-5 0z" stroke="#666" stroke-width=".6" fill="none"/><circle cx="3.500" cy="3.500" r=".9" fill="#666"/></svg>
<div style="position:absolute;left:2910.4px;top:658.0px;width:48.0px;height:46.0px;background:#dfe2e8;border-radius:2px"></div>
<svg style="position:absolute;left:2920.0px;top:668.0px;" width="28.0" height="28.0" viewBox="0 0 7.00 7.00"><path d="M1.400 4.800c0-3 4.200-3 4.200 0M3.500 4v1.600" stroke="#9a9ea8" stroke-width=".6" fill="none"/></svg>
<div style="position:absolute;left:2918.0px;top:1511.1px;height:25.8px;line-height:25.8px;font-size:18.4px;color:#555;white-space:nowrap;">···</div>
<div style="position:absolute;left:441.2px;top:1483.2px;width:2030.8px;height:64.8px;background:#f6f7f9;overflow:hidden"><div style="position:absolute;left:22px;top:26px;width:2040px;font-size:19.300px;line-height:26px;color:#333;letter-spacing:.1px;white-space:normal;word-break:break-all">完善的前方向：“挑战杯”分为自然科学类学术论文，哲学社会科学类社会调查报告和学术论文，科技发明制作A类、B类三项。其中自然科学类学术论文仅限本专科生参赛。在“团省委”分为生态环保和能源化工，生命科学和医药卫生部分的作品分属三项类别，参赛者可根据自身专业选择申报。</div></div>
<div style="position:absolute;left:0.0px;top:1550.4px;width:2969.2px;height:54.4px;background:#f6f7f9;border-top:2px solid #ecedf0"></div>
<div style="position:absolute;left:0.0px;top:1600.8px;width:2969.2px;height:4.0px;background:#fbfbfc"></div>
<div style="position:absolute;left:14.0px;top:1567.0px;height:23.5px;line-height:23.5px;font-size:16.8px;color:#333;white-space:nowrap;">幻灯片 4 / 21</div>
<div style="position:absolute;left:145.6px;top:1566.0px;width:1.6px;height:26.0px;background:#d5d7dc"></div>
<div style="position:absolute;left:166.0px;top:1567.0px;height:23.5px;line-height:23.5px;font-size:16.8px;color:#333;white-space:nowrap;">Office 主题</div>
<svg style="position:absolute;left:306.0px;top:1567.2px;" width="26.0" height="24.8" viewBox="0 0 6.50 6.20"><path d="M1 1h3.400M2.700 1v3.600M4 3.600h1.800M4.900 2.800v2" stroke="#444" stroke-width=".55" fill="none"/></svg>
<div style="position:absolute;left:336.0px;top:1567.0px;height:23.5px;line-height:23.5px;font-size:16.8px;color:#333;white-space:nowrap;">缺失字体</div>
<svg style="position:absolute;left:1919.2px;top:1567.2px;" width="26.0" height="24.8" viewBox="0 0 6.50 6.20"><circle cx="3.200" cy="3.100" r="2.300" stroke="#555" stroke-width=".5" fill="none"/><path d="M2.200 3.100l.8.800 1.400-1.600" stroke="#555" stroke-width=".5" fill="none"/></svg>
<div style="position:absolute;left:1950.0px;top:1567.2px;height:24.1px;line-height:24.1px;font-size:17.2px;color:#333;white-space:nowrap;">智能美化 ▾</div>
<svg style="position:absolute;left:2084.0px;top:1568.0px;" width="24.0" height="24.0" viewBox="0 0 6.00 6.00"><path d="M.8 1.400h4.400M.8 3h4.400M.8 4.600h4.400" stroke="#333" stroke-width=".7"/></svg>
<div style="position:absolute;left:2110.0px;top:1567.4px;height:23.5px;line-height:23.5px;font-size:16.8px;color:#333;white-space:nowrap;">备注 ▾</div>
<svg style="position:absolute;left:2182.0px;top:1568.0px;" width="26.0" height="24.0" viewBox="0 0 6.50 6.00"><path d="M1 1.200h4v3.400h-4zM3.600.6l1.800 1.200" stroke="#333" stroke-width=".6" fill="none"/></svg>
<div style="position:absolute;left:2210.0px;top:1567.4px;height:23.5px;line-height:23.5px;font-size:16.8px;color:#333;white-space:nowrap;">批注</div>
<div style="position:absolute;left:2284.0px;top:1560.0px;width:42.0px;height:38.0px;background:#dde0e6;border-radius:2px"></div>
<svg style="position:absolute;left:2292.0px;top:1567.2px;" width="28.0" height="24.8" viewBox="0 0 7.00 6.20"><rect x="1" y="1" width="4.600" height="4" stroke="#333" stroke-width=".6" fill="none"/></svg>
<svg style="position:absolute;left:2336.0px;top:1567.2px;" width="28.0" height="24.8" viewBox="0 0 7.00 6.20"><g fill="#444"><rect x="1" y="1" width="1.600" height="1.600"/><rect x="3.600" y="1" width="1.600" height="1.600"/><rect x="1" y="3.600" width="1.600" height="1.600"/><rect x="3.600" y="3.600" width="1.600" height="1.600"/></g></svg>
<svg style="position:absolute;left:2370.0px;top:1567.2px;" width="30.0" height="24.8" viewBox="0 0 7.50 6.20"><rect x="1" y="1" width="5" height="4" stroke="#333" stroke-width=".6" fill="none"/></svg>
<div style="position:absolute;left:2419.2px;top:1564.0px;width:1.6px;height:32.0px;background:#d5d7dc"></div>
<div style="position:absolute;left:2440.0px;top:1560.0px;width:44.8px;height:38.4px;background:#5c6b8c;border-radius:1.500px"></div>
<svg style="position:absolute;left:2450.0px;top:1567.2px;" width="28.0" height="24.8" viewBox="0 0 7.00 6.20"><path d="M2 1l3.400 2.100-3.400 2.100z" fill="#fff"/></svg>
<div style="position:absolute;left:2492.0px;top:1572.7px;height:14.6px;line-height:14.6px;font-size:10.4px;color:#555;white-space:nowrap;">▾</div>
<svg style="position:absolute;left:2536.0px;top:1567.2px;" width="28.0" height="24.8" viewBox="0 0 7.00 6.20"><path d="M1 2.400v-1.400h1.400M4.600 1h1.400v1.400M6 4.200v1.400h-1.400M2.400 5.600h-1.400v-1.400" stroke="#333" stroke-width=".6" fill="none"/></svg>
<div style="position:absolute;left:2582.0px;top:1568.0px;height:22.4px;line-height:22.4px;font-size:16.0px;color:#333;white-space:nowrap;">100% ▾</div>
<div style="position:absolute;left:2658.0px;top:1564.4px;height:28.0px;line-height:28.0px;font-size:20.0px;color:#333;white-space:nowrap;">−</div>
<div style="position:absolute;left:2694.0px;top:1578.0px;width:210.0px;height:3.2px;background:#dcdde1"></div>
<div style="position:absolute;left:2694.0px;top:1577.2px;width:106.0px;height:5.2px;background:#555"></div>
<div style="position:absolute;left:2794.4px;top:1570.4px;width:16.8px;height:17.6px;background:#fff;border:1.600px solid #555;border-radius:50%"></div>
<div style="position:absolute;left:2924.0px;top:1563.3px;height:30.2px;line-height:30.2px;font-size:21.6px;color:#333;white-space:nowrap;">+</div>
</div>
</div>
</div>
<div id="strip" class="abs">
<div class="tile act" style="top:129.0px"><div class="av"><svg width="47.7" height="47.7" viewBox="0 0 28 28" style="display:block;background:#4a5e9e"><g filter="url(#bl5)"><rect width="28" height="28" fill="#4c609f"/><rect x="4" y="1" width="8" height="9" fill="#b4c0e2"/><rect x="20.500" y="3" width="4" height="8" fill="#a4b2dc"/><rect x="14" y="0" width="7" height="12" fill="#3a4c8c"/><rect x="11.300" y="0" width="2.600" height="15" fill="#1a1c2a"/><rect x="9.500" y="1" width="1.200" height="8" fill="#2a2e48"/>
<path d="M0 12c2-3 6-4 9-2.500 2.500 1.300 4 4 5 7l.5 4H0z" fill="#5269aa"/><circle cx="3.200" cy="8.500" r="2.600" fill="#9a92b6"/><path d="M2 14l4 3" stroke="#6a80c0" stroke-width="1.200"/>
<path d="M15 18c.5-4 3-7 7-7.500 3 0 5 1.500 6 3.500v8H15z" fill="#4860a4"/><path d="M10.500 9c1.500 2 3 4.500 3.800 7.500" stroke="#1e2238" stroke-width=".8" fill="none"/>
<ellipse cx="24.300" cy="11.200" rx="2.200" ry="2.600" fill="#c4a098"/><path d="M22 10c.3-2.200 3.800-2.600 4.800-.6l-.5 .8-3.800.6z" fill="#15151f"/><ellipse cx="24.800" cy="12.800" rx=".9" ry=".5" fill="#3a2220"/>
<path d="M0 19c5-1 10-.500 14 1l14-1.500v9.500H0z" fill="#0f1018"/><rect x="19" y="16.300" width="3.800" height="4.500" fill="#0c0d14"/><rect x="17.500" y="17" width="1.800" height="1.800" fill="#b8a8b8"/>
<circle cx="5.800" cy="16.300" r="1.300" fill="#d01c24"/><rect x="4.500" y="17.500" width="3" height="2.500" fill="#3a2420"/>
<rect x="7.800" y="20" width="9.500" height="1.400" fill="#dfe2ee"/><path d="M13 22.300l3-.6 1 .8-3 .6z" fill="#e8e8f0"/>
<path d="M3 24.800c7-.8 15-.8 22 0V28H3z" fill="#7c4c14"/></g></svg></div><div class="lb" style="left:0;bottom:.5px;height:21.500px;line-height:22.500px;padding-left:37px;font-size:10.700px"><span style="position:absolute;left:0;top:3px"><svg width="15" height="15" viewBox="0 0 16 16"><rect x="1.200" y="1.600" width="13.600" height="9.800" rx="1.400" fill="#fff"/><path d="M4.400 13.800h7.200" stroke="#fff" stroke-width="1.500"/><path d="M4.800 9c.7-2.500 2.400-3.700 4.700-3.700v-1.600l2.900 2.500-2.900 2.500v-1.600c-1.900 0-3.400.5-4.700 1.900z" fill="#222"/></svg></span><span style="position:absolute;left:19px;top:3px"><svg width="15" height="15" viewBox="0 0 16 16"><rect x="5.200" y="1" width="5.600" height="9.400" rx="2.800" fill="#fff"/><path d="M5.200 7.200h5.600v.4a2.800 2.800 0 0 1-5.600 0z" fill="#3fe23a"/><path d="M2.600 7.400c0 3.200 2.300 5.200 5.400 5.200s5.400-2 5.400-5.200" stroke="#fff" stroke-width="1.300" fill="none"/><path d="M8 12.400v2.600" stroke="#fff" stroke-width="1.500" fill="none"/></svg></span>耿晨光的屏幕共享</div></div>
<div class="tile" style="top:222.3px"><div class="av"><svg width="47.7" height="47.7" viewBox="0 0 28 28" style="display:block;background:#a8742a"><g filter="url(#bl5)"><rect width="28" height="28" fill="#a9762c"/><rect x="0" y="0" width="14" height="6" fill="#2a2016"/><path d="M4 0v6M6.500 0v6M9 0v6M11.500 0v6" stroke="#b8842e" stroke-width="1"/><rect x="14" y="1" width="12" height="13" fill="#8a6a24"/><rect x="15" y="1.500" width="8" height="2.200" fill="#c8c02a"/><rect x="16" y="5" width="10" height="1.300" fill="#20180c"/><rect x="16" y="7" width="9" height="2" fill="#d8d8c0"/><rect x="17" y="10.500" width="9" height="2.600" fill="#c8b820"/><rect x="17" y="14.500" width="10" height="9" fill="#a87424"/><path d="M20 16v6M23 16v6" stroke="#3a2810" stroke-width="1"/><rect x="0" y="23" width="28" height="5" fill="#7a7468"/>
<path d="M2.500 10c1-4 5-6 8-4.500 3 1.500 3.500 6 2.500 9.500-1 3-3 4.500-6 4-3.500-.500-5.500-5-4.500-9z" fill="#f6f5f2"/><path d="M8 5.500l1.500-3 1 3.500z" fill="#f6f5f2"/><ellipse cx="3.800" cy="11.500" rx="3.400" ry="4.400" fill="#121212" transform="rotate(15 3.800 11.500)"/><path d="M8.500 10.500l3-2 .3 2.500-2.500 2z" fill="#1a1a1a"/><path d="M7.500 15.500l3-1.200" stroke="#d82a3a" stroke-width=".7"/>
<path d="M5 18c2-1 5-1 6 .500l1 6c.500 2-1 3.500-2.500 3.500-2 0-4-3-4.500-10z" fill="#f2f0ec"/><ellipse cx="12" cy="26" rx="1.800" ry="1.500" fill="#1a1a1a"/>
<circle cx="15.200" cy="8.800" r="1.700" fill="#e8c4a8"/><path d="M13.500 8c.2-1.800 3-2 3.600-.3" stroke="#1a1410" stroke-width="1" fill="none"/><path d="M13.200 11c1.500-1 3.500-1 4.500 0l1.800 5.500-2 1-1-1.500-1.500 2.500-2-1.500z" fill="#16161c"/><path d="M15 11.500l.8 3 .8-3z" fill="#e8e4e0"/><path d="M15 17.500l3.500-.5.500 4-1 6h-2l-1-5z" fill="#e8a8b4"/><rect x="15.500" y="17" width="1.600" height="2.400" fill="#c8202c"/><path d="M15.500 27h2.500" stroke="#20140c" stroke-width="1"/></g></svg></div><div class="lb" style="padding-left:24.600px"><span style="position:absolute;left:0;top:.6px"><svg width="20" height="19.400" viewBox="0 0 19 19" preserveAspectRatio="none"><rect width="19" height="19" fill="#ff7a0f"/><circle cx="9.500" cy="6.600" r="3.100" fill="#fff"/><path d="M2.800 16c0-4 3-6 6.700-6s6.700 2 6.700 6z" fill="#fff"/></svg></span>李慕原</div></div>
<div class="tile" style="top:315.6px"><div class="av"><svg width="47.7" height="47.7" viewBox="0 0 28 28" style="display:block;background:#ffffff"><g filter="url(#bl3)" transform="translate(14 14) scale(1.14) translate(-14.200 -15.500)"><rect x="-4" y="-4" width="36" height="36" fill="#fff"/><path d="M7.500 16c0-5 3-7.500 6.500-7.500s7 2.500 7.500 7c.5 3.500 0 7-1.500 9.500l-2 1.500-1.500-1-2 .5-2.500-.5-2 1c-2-2-2.500-6-2.500-10.500z" fill="#fbe3e3" stroke="#e4a3a8" stroke-width=".5"/><path d="M13.500 8c-2.500-2.500-6-2-6.500.5s2.500 3.500 6.500 1z" fill="#f6a8ac"/><path d="M14 8c2.500-2.500 6-2.500 6.800 0s-2.800 3.800-6.800 1.500z" fill="#f6a8ac"/><circle cx="13.800" cy="8.800" r="1.300" fill="#f08c94"/><ellipse cx="9.800" cy="15.500" rx="2" ry="1.500" fill="#f7b4b8"/><path d="M12.500 14l1 .8M15.500 14l-1 .8" stroke="#b06a70" stroke-width=".4"/><path d="M17 17c1.500 1 2 3 1.500 5" stroke="#e4a3a8" stroke-width=".5" fill="none"/></g></svg></div><div class="lb" style="padding-left:22px"><span style="position:absolute;left:2.600px;top:2px"><svg width="16" height="16" viewBox="0 0 16 16"><g transform="rotate(16 8 8)"><rect x="5.600" y="1.400" width="4.800" height="8.400" rx="2.400" fill="#fff"/><path d="M3.400 7.300c0 2.900 2 4.700 4.600 4.700s4.600-1.800 4.600-4.700" stroke="#fff" stroke-width="1.100" fill="none"/><path d="M8 12v2.200" stroke="#fff" stroke-width="1.300" fill="none"/></g><path d="M2.300 14L13.600 2.400" stroke="#0d0e0f" stroke-width="2.400"/><path d="M2.300 14L13.600 2.400" stroke="#f0443c" stroke-width="1.200"/></svg></span>王文英</div></div>
<div class="tile" style="top:408.9px"><div class="av"><svg width="47.7" height="47.7" viewBox="0 0 28 28" style="display:block;background:#8ea3c8"><g filter="url(#bl5)"><rect width="28" height="28" fill="#8fa4ca"/><rect width="28" height="12" fill="#7b93c0"/><path d="M0 16c8-2 18-1 28 2v10H0z" fill="#b6c2da"/><path d="M12.500 28c.3-8 .3-17 .8-26l.8 0c0 9 .2 18 .8 26z" fill="#23283a"/><path d="M13.500 6l-5 4M13.500 9l5.500-3.500M13.500 12l-6.500 3M13.700 14l6 -2M13.500 17l-5.500 2.500M13.800 19l5 1M13.500 4l3-2.500M13.300 7.500l-3.500-3" stroke="#2c3348" stroke-width=".9" fill="none"/><path d="M6 11l4-1.500M17 7l4-1M5 16l3-1.500M19 13l3-.5M7 20l2-1" stroke="#3a425a" stroke-width="1.400" fill="none"/></g></svg></div><div class="lb" style="padding-left:22px"><span style="position:absolute;left:2.600px;top:2px"><svg width="16" height="16" viewBox="0 0 16 16"><g transform="rotate(16 8 8)"><rect x="5.600" y="1.400" width="4.800" height="8.400" rx="2.400" fill="#fff"/><path d="M3.400 7.300c0 2.900 2 4.700 4.600 4.700s4.600-1.800 4.600-4.700" stroke="#fff" stroke-width="1.100" fill="none"/><path d="M8 12v2.200" stroke="#fff" stroke-width="1.300" fill="none"/></g><path d="M2.300 14L13.600 2.400" stroke="#0d0e0f" stroke-width="2.400"/><path d="M2.300 14L13.600 2.400" stroke="#f0443c" stroke-width="1.200"/></svg></span>冯馨竹</div></div>
<div class="tile" style="top:502.2px"><div class="av blue" style="font-size:17px;line-height:47.700px">乐妍</div><div class="lb" style="padding-left:22px"><span style="position:absolute;left:2.600px;top:2px"><svg width="16" height="16" viewBox="0 0 16 16"><g transform="rotate(16 8 8)"><rect x="5.600" y="1.400" width="4.800" height="8.400" rx="2.400" fill="#fff"/><path d="M3.400 7.300c0 2.900 2 4.700 4.600 4.700s4.600-1.800 4.600-4.700" stroke="#fff" stroke-width="1.100" fill="none"/><path d="M8 12v2.200" stroke="#fff" stroke-width="1.300" fill="none"/></g><path d="M2.300 14L13.600 2.400" stroke="#0d0e0f" stroke-width="2.400"/><path d="M2.300 14L13.600 2.400" stroke="#f0443c" stroke-width="1.200"/></svg></span>财税2103丁乐妍</div></div>
<div class="tile" style="top:595.5px"><div class="av"><svg width="47.7" height="47.7" viewBox="0 0 28 28" style="display:block;background:#8da04a"><g filter="url(#bl6)"><rect width="28" height="28" fill="#8c9f4a"/><rect width="28" height="9" fill="#a5b25a"/><rect y="18" width="28" height="10" fill="#7f9648"/><circle cx="8" cy="8" r="2" fill="#d6cf3e"/><circle cx="11" cy="13" r="1.800" fill="#d8d040"/><circle cx="6" cy="16" r="1.500" fill="#cfc840"/><circle cx="19" cy="7" r="1.500" fill="#c8c648"/><circle cx="21" cy="16" r="1.600" fill="#c9c24a"/><circle cx="9" cy="21" r="1.500" fill="#c6c04a"/><circle cx="17" cy="22" r="1.500" fill="#b9bd58"/><path d="M4 28l3-12M12 28l2-13M20 28l-2-12M24 26l-1-9" stroke="#6d8a3c" stroke-width=".8"/><ellipse cx="14.200" cy="12.300" rx="2.600" ry="1.700" fill="#d79ad6"/><ellipse cx="14.500" cy="12" rx="1.400" ry=".9" fill="#e7b5e6"/></g></svg></div><div class="lb" style="padding-left:22px"><span style="position:absolute;left:2.600px;top:2px"><svg width="16" height="16" viewBox="0 0 16 16"><g transform="rotate(16 8 8)"><rect x="5.600" y="1.400" width="4.800" height="8.400" rx="2.400" fill="#fff"/><path d="M3.400 7.300c0 2.900 2 4.700 4.600 4.700s4.600-1.800 4.600-4.700" stroke="#fff" stroke-width="1.100" fill="none"/><path d="M8 12v2.200" stroke="#fff" stroke-width="1.300" fill="none"/></g><path d="M2.300 14L13.600 2.400" stroke="#0d0e0f" stroke-width="2.400"/><path d="M2.300 14L13.600 2.400" stroke="#f0443c" stroke-width="1.200"/></svg></span>韩瑜</div></div>
</div>
<div id="panel" class="abs">
<svg width="0" height="0" style="position:absolute"><defs><filter id="bl3" x="-10%" y="-10%" width="120%" height="120%"><feGaussianBlur stdDeviation=".3"/></filter><filter id="bl5" x="-10%" y="-10%" width="120%" height="120%"><feGaussianBlur stdDeviation=".55"/></filter><filter id="bl6" x="-10%" y="-10%" width="120%" height="120%"><feGaussianBlur stdDeviation=".8"/></filter></defs></svg>
<div class="abs" style="left:0;top:0;width:326px;height:1px;background:#eeeff0"></div><div id="phead" class="abs"><svg class="abs" style="left:4px;top:6px" width="16" height="15" viewBox="0 0 16 15"><circle cx="8" cy="4.200" r="2.900" fill="#9a9da2"/><path d="M1.300 13.600c0-4 3-6 6.700-6s6.700 2 6.700 6z" fill="#9a9da2"/></svg><div class="abs" style="left:22.500px;top:0;height:28px;line-height:29px;font-size:11.700px;color:#222">管理成员(75)</div><svg class="abs" style="left:295px;top:8px" width="28" height="12" viewBox="0 0 28 12"><circle cx="2.800" cy="6" r=".95" fill="#222"/><circle cx="7.600" cy="6" r=".95" fill="#222"/><circle cx="12.400" cy="6" r=".95" fill="#222"/><path d="M17.600 2.200l7.600 7.600M25.200 2.200l-7.600 7.600" stroke="#222" stroke-width="1.100"/></svg><div class="abs" style="left:325.500px;top:.5px;width:26px;height:27px;background:#eceef2;border:1px solid #d3d6dc"></div><svg class="abs" style="left:333px;top:9px" width="12" height="10" viewBox="0 0 12 10"><path d="M1.800 1.800h8M1.800 3.900h8M1.800 6h8M1.800 8.100h8" stroke="#b4b7bd" stroke-width="1"/></svg></div>
<div id="search" class="abs"><svg class="abs" style="left:6px;top:6.500px" width="14" height="14" viewBox="0 0 14 14"><circle cx="6" cy="6" r="4.300" stroke="#6e7a92" stroke-width="1.500" fill="none"/><path d="M9.200 9.400l2.600 2.600" stroke="#6e7a92" stroke-width="1.700" stroke-linecap="round"/></svg><div class="abs" style="left:21.500px;top:0;height:26px;line-height:27px;font-size:11.600px;color:#8e8e8e">搜索成员</div></div>
<div class="row" style="top:82.3px"><div class="av"><svg width="28.6" height="28.6" viewBox="0 0 28 28" style="display:block;background:#a8742a"><g filter="url(#bl5)"><rect width="28" height="28" fill="#a9762c"/><rect x="0" y="0" width="14" height="6" fill="#2a2016"/><path d="M4 0v6M6.500 0v6M9 0v6M11.500 0v6" stroke="#b8842e" stroke-width="1"/><rect x="14" y="1" width="12" height="13" fill="#8a6a24"/><rect x="15" y="1.500" width="8" height="2.200" fill="#c8c02a"/><rect x="16" y="5" width="10" height="1.300" fill="#20180c"/><rect x="16" y="7" width="9" height="2" fill="#d8d8c0"/><rect x="17" y="10.500" width="9" height="2.600" fill="#c8b820"/><rect x="17" y="14.500" width="10" height="9" fill="#a87424"/><path d="M20 16v6M23 16v6" stroke="#3a2810" stroke-width="1"/><rect x="0" y="23" width="28" height="5" fill="#7a7468"/>
<path d="M2.500 10c1-4 5-6 8-4.500 3 1.500 3.500 6 2.500 9.500-1 3-3 4.500-6 4-3.500-.500-5.500-5-4.500-9z" fill="#f6f5f2"/><path d="M8 5.500l1.500-3 1 3.500z" fill="#f6f5f2"/><ellipse cx="3.800" cy="11.500" rx="3.400" ry="4.400" fill="#121212" transform="rotate(15 3.800 11.500)"/><path d="M8.500 10.500l3-2 .3 2.500-2.500 2z" fill="#1a1a1a"/><path d="M7.500 15.500l3-1.200" stroke="#d82a3a" stroke-width=".7"/>
<path d="M5 18c2-1 5-1 6 .500l1 6c.500 2-1 3.500-2.500 3.500-2 0-4-3-4.500-10z" fill="#f2f0ec"/><ellipse cx="12" cy="26" rx="1.800" ry="1.500" fill="#1a1a1a"/>
<circle cx="15.200" cy="8.800" r="1.700" fill="#e8c4a8"/><path d="M13.500 8c.2-1.800 3-2 3.600-.3" stroke="#1a1410" stroke-width="1" fill="none"/><path d="M13.200 11c1.500-1 3.500-1 4.500 0l1.800 5.500-2 1-1-1.500-1.500 2.500-2-1.500z" fill="#16161c"/><path d="M15 11.500l.8 3 .8-3z" fill="#e8e4e0"/><path d="M15 17.500l3.500-.5.500 4-1 6h-2l-1-5z" fill="#e8a8b4"/><rect x="15.500" y="17" width="1.600" height="2.400" fill="#c8202c"/><path d="M15.500 27h2.500" stroke="#20140c" stroke-width="1"/></g></svg></div><div class="nm" style="top:-7.500px"><span class="c">李慕原</span></div><div class="nm" style="top:9px;color:#9a9a9a;font-size:11.600px">(<span class="c">主持人</span>, <span class="c">我</span>)</div></div>
<div class="row" style="top:124.2px"><div class="av"><svg width="28.6" height="28.6" viewBox="0 0 28 28" style="display:block;background:#4a5e9e"><g filter="url(#bl5)"><rect width="28" height="28" fill="#4c609f"/><rect x="4" y="1" width="8" height="9" fill="#b4c0e2"/><rect x="20.500" y="3" width="4" height="8" fill="#a4b2dc"/><rect x="14" y="0" width="7" height="12" fill="#3a4c8c"/><rect x="11.300" y="0" width="2.600" height="15" fill="#1a1c2a"/><rect x="9.500" y="1" width="1.200" height="8" fill="#2a2e48"/>
<path d="M0 12c2-3 6-4 9-2.500 2.500 1.300 4 4 5 7l.5 4H0z" fill="#5269aa"/><circle cx="3.200" cy="8.500" r="2.600" fill="#9a92b6"/><path d="M2 14l4 3" stroke="#6a80c0" stroke-width="1.200"/>
<path d="M15 18c.5-4 3-7 7-7.500 3 0 5 1.500 6 3.500v8H15z" fill="#4860a4"/><path d="M10.500 9c1.500 2 3 4.500 3.800 7.500" stroke="#1e2238" stroke-width=".8" fill="none"/>
<ellipse cx="24.300" cy="11.200" rx="2.200" ry="2.600" fill="#c4a098"/><path d="M22 10c.3-2.200 3.800-2.600 4.800-.6l-.5 .8-3.800.6z" fill="#15151f"/><ellipse cx="24.800" cy="12.800" rx=".9" ry=".5" fill="#3a2220"/>
<path d="M0 19c5-1 10-.500 14 1l14-1.500v9.500H0z" fill="#0f1018"/><rect x="19" y="16.300" width="3.800" height="4.500" fill="#0c0d14"/><rect x="17.500" y="17" width="1.800" height="1.800" fill="#b8a8b8"/>
<circle cx="5.800" cy="16.300" r="1.300" fill="#d01c24"/><rect x="4.500" y="17.500" width="3" height="2.500" fill="#3a2420"/>
<rect x="7.800" y="20" width="9.500" height="1.400" fill="#dfe2ee"/><path d="M13 22.300l3-.6 1 .8-3 .6z" fill="#e8e8f0"/>
<path d="M3 24.800c7-.8 15-.8 22 0V28H3z" fill="#7c4c14"/></g></svg></div><div class="nm"><span class="c">耿晨光</span></div><div class="ic" style="left:276.800px;top:8.600px"><svg width="14" height="14" viewBox="0 0 14 14"><rect x="1.200" y="1.200" width="11.400" height="8.400" rx="1" fill="#d0d0d3"/><path d="M3.200 11.500h7.600" stroke="#d0d0d3" stroke-width="1.200"/><path d="M4.200 7.300c.6-2 2-3 4-3v-1.200l2.300 2-2.300 2v-1.200c-1.600 0-2.900.4-4 1.400z" fill="#f1f1f3"/></svg></div><div class="ic" style="left:298.600px;top:6.300px"><svg width="16" height="18" viewBox="0 0 16 18"><rect x="5.200" y="1" width="5.600" height="10.600" rx="2.800" fill="#d0d0d3"/><path d="M5.200 6h5.600v2.800a2.800 2.800 0 0 1-5.600 0z" fill="#4df646"/><path d="M2.900 8.500c0 3.300 2.200 5.300 5.100 5.300s5.100-2 5.100-5.300" stroke="#d0d0d3" stroke-width="1" fill="none"/><path d="M8 13.800v2.300M4.600 16.400h6.800" stroke="#d0d0d3" stroke-width="1" fill="none"/></svg></div><div class="ic" style="left:319.800px;top:8.400px"><svg width="18" height="14" viewBox="0 0 18 14"><rect x="2.100" y="2.600" width="9.400" height="8.600" rx=".8" fill="#d0d0d3"/><path d="M11.800 6.900l4.700-4.300v8.600z" fill="#d0d0d3"/><path d="M1.600 12.100L11.800 1.700" stroke="#ff766e" stroke-width="1.050"/></svg></div></div>
<div class="row" style="top:166.0px"><div class="av blue" style="line-height:28.600px;font-size:11px">*</div><div class="nm">,</div><div class="ic" style="left:298.600px;top:6px"><svg width="16" height="18" viewBox="0 0 16 18"><rect x="5.300" y="1.600" width="5.400" height="10" rx="2.700" fill="#d0d0d3"/><path d="M2.900 8.500c0 3.300 2.200 5.300 5.100 5.300s5.100-2 5.100-5.300" stroke="#d0d0d3" stroke-width="1" fill="none"/><path d="M8 13.800v2.300M4.800 16.400h6.400" stroke="#d0d0d3" stroke-width="1" fill="none"/><path d="M1.700 15.400L14.400 2.700" stroke="#ff766e" stroke-width="1.050"/></svg></div><div class="ic" style="left:319.800px;top:8.400px"><svg width="18" height="14" viewBox="0 0 18 14"><rect x="2.100" y="2.600" width="9.400" height="8.600" rx=".8" fill="#d0d0d3"/><path d="M11.800 6.900l4.700-4.300v8.600z" fill="#d0d0d3"/><path d="M1.600 12.100L11.800 1.700" stroke="#ff766e" stroke-width="1.050"/></svg></div></div>
<div class="row" style="top:207.9px"><div class="av"><svg width="28.6" height="28.6" viewBox="0 0 28 28" style="display:block;background:#ffffff"><g transform="translate(14 13.500) scale(1.17) translate(-14.500 -13)"><path d="M3 13c0-6 5-9.500 11-9.500S26 7 26 13.500 21 22.500 14 22.500 3 19.500 3 13z" fill="#f6ebe1" stroke="#7a6a60" stroke-width=".5"/><path d="M8.500 14l2.500-7.500 2.500 7z" fill="#b99a80"/><path d="M15 13.500l3-7 2.500 7.500z" fill="#b99a80"/><ellipse cx="9.800" cy="16.500" rx="2.900" ry="2.600" fill="#fff" stroke="#555" stroke-width=".4"/><ellipse cx="17.500" cy="16.700" rx="2.900" ry="2.600" fill="#fff" stroke="#555" stroke-width=".4"/><circle cx="10.500" cy="16.800" r="1.900" fill="#0c0c0c"/><circle cx="18.300" cy="17" r="1.900" fill="#0c0c0c"/></g></svg></div><div class="nm">08<span class="c">税三熊鑫钰</span></div><div class="ic" style="left:298.600px;top:6px"><svg width="16" height="18" viewBox="0 0 16 18"><rect x="5.300" y="1.600" width="5.400" height="10" rx="2.700" fill="#d0d0d3"/><path d="M2.900 8.500c0 3.300 2.200 5.300 5.100 5.300s5.100-2 5.100-5.300" stroke="#d0d0d3" stroke-width="1" fill="none"/><path d="M8 13.800v2.300M4.800 16.400h6.400" stroke="#d0d0d3" stroke-width="1" fill="none"/><path d="M1.700 15.400L14.400 2.700" stroke="#ff766e" stroke-width="1.050"/></svg></div><div class="ic" style="left:319.800px;top:8.400px"><svg width="18" height="14" viewBox="0 0 18 14"><rect x="2.100" y="2.600" width="9.400" height="8.600" rx=".8" fill="#d0d0d3"/><path d="M11.800 6.900l4.700-4.300v8.600z" fill="#d0d0d3"/><path d="M1.600 12.100L11.800 1.700" stroke="#ff766e" stroke-width="1.050"/></svg></div></div>
<div class="row" style="top:249.7px"><div class="av"><svg width="28.6" height="28.6" viewBox="0 0 28 28" style="display:block;background:#000"><g filter="url(#bl5)"><rect x="18.500" y="3" width=".8" height="22" fill="#10180c"/><circle cx="19.500" cy="3" r="1.300" fill="#3a9a24"/><path d="M5 23c1-3 3-4 4.500-2.500C11 19 13 20.500 13.500 24 11 25.500 7 25.500 5 23z" fill="#e8efe0"/><path d="M7 24l2.500-3 2 3z" fill="#fff"/></g></svg></div><div class="nm">13851795909</div><div class="ic" style="left:298.600px;top:6px"><svg width="16" height="18" viewBox="0 0 16 18"><rect x="5.300" y="1.600" width="5.400" height="10" rx="2.700" fill="#d0d0d3"/><path d="M2.900 8.500c0 3.300 2.200 5.300 5.100 5.300s5.100-2 5.100-5.300" stroke="#d0d0d3" stroke-width="1" fill="none"/><path d="M8 13.800v2.300M4.800 16.400h6.400" stroke="#d0d0d3" stroke-width="1" fill="none"/><path d="M1.700 15.400L14.400 2.700" stroke="#ff766e" stroke-width="1.050"/></svg></div><div class="ic" style="left:319.800px;top:8.400px"><svg width="18" height="14" viewBox="0 0 18 14"><rect x="2.100" y="2.600" width="9.400" height="8.600" rx=".8" fill="#d0d0d3"/><path d="M11.800 6.900l4.700-4.300v8.600z" fill="#d0d0d3"/><path d="M1.600 12.100L11.800 1.700" stroke="#ff766e" stroke-width="1.050"/></svg></div></div>
<div class="row" style="top:291.6px"><div class="av"><svg width="28.6" height="28.6" viewBox="0 0 28 28" style="display:block;background:#7b3f24"><g filter="url(#bl5)"><rect width="28" height="28" fill="#7b3f24"/><rect x="0" y="0" width="7" height="28" fill="#5e2c18"/><path d="M8 6c2-5 10-6 13-1 2 3 1 8-1 10l-8 2c-4-2-5-7-4-11z" fill="#181210"/><path d="M13 8c3-2 7-1 8 2 .8 3-.5 6.500-3 8-3 .5-5-1.500-5.500-4z" fill="#e6bda2"/><path d="M16 17l4 0 1 4-5 1z" fill="#dcae94"/><path d="M6 28c1-5 5-7 9-7l4 1c4 0 7 3 8 6z" fill="#f2ede8"/><path d="M14 21l3 5 3-4" fill="#d9a78c"/><circle cx="7.500" cy="9" r="1" fill="#fff"/><circle cx="8.200" cy="13" r=".9" fill="#fff"/><circle cx="7.200" cy="16" r=".8" fill="#eee"/></g></svg></div><div class="nm">2101<span class="c">王丹</span></div><div class="ic" style="left:298.600px;top:6px"><svg width="16" height="18" viewBox="0 0 16 18"><rect x="5.300" y="1.600" width="5.400" height="10" rx="2.700" fill="#d0d0d3"/><path d="M2.900 8.500c0 3.300 2.200 5.300 5.100 5.300s5.100-2 5.100-5.300" stroke="#d0d0d3" stroke-width="1" fill="none"/><path d="M8 13.800v2.300M4.800 16.400h6.400" stroke="#d0d0d3" stroke-width="1" fill="none"/><path d="M1.700 15.400L14.400 2.700" stroke="#ff766e" stroke-width="1.050"/></svg></div><div class="ic" style="left:319.800px;top:8.400px"><svg width="18" height="14" viewBox="0 0 18 14"><rect x="2.100" y="2.600" width="9.400" height="8.600" rx=".8" fill="#d0d0d3"/><path d="M11.800 6.900l4.700-4.300v8.600z" fill="#d0d0d3"/><path d="M1.600 12.100L11.800 1.700" stroke="#ff766e" stroke-width="1.050"/></svg></div></div>
<div class="row" style="top:333.5px"><div class="av"><svg width="28.6" height="28.6" viewBox="0 0 28 28" style="display:block;background:#1c2626"><g filter="url(#bl5)"><rect width="28" height="28" fill="#1a2424"/><rect x="3" y="0" width="2" height="28" fill="#2c3a38"/><rect x="9" y="0" width="1.500" height="20" fill="#2a3634"/><rect x="22" y="0" width="2.500" height="28" fill="#27322f"/><rect x="0" y="0" width="28" height="6" fill="#2e3c3c" opacity=".6"/><path d="M11 28c-.5-8 .5-13 3-15.500l5-.5c3 2 4.500 8 4 16z" fill="#6e5b2e"/><path d="M14 13l2.500 15" stroke="#4e3f1e" stroke-width="1"/><ellipse cx="16.800" cy="8" rx="3" ry="3.800" fill="#15110e"/><rect x="15.200" y="10.500" width="3" height="2.500" fill="#c09a7a"/></g></svg></div><div class="nm">2102<span class="c">曹杨</span></div><div class="ic" style="left:298.600px;top:6px"><svg width="16" height="18" viewBox="0 0 16 18"><rect x="5.300" y="1.600" width="5.400" height="10" rx="2.700" fill="#d0d0d3"/><path d="M2.900 8.500c0 3.300 2.200 5.300 5.100 5.300s5.100-2 5.100-5.300" stroke="#d0d0d3" stroke-width="1" fill="none"/><path d="M8 13.800v2.300M4.800 16.400h6.400" stroke="#d0d0d3" stroke-width="1" fill="none"/><path d="M1.700 15.400L14.400 2.700" stroke="#ff766e" stroke-width="1.050"/></svg></div><div class="ic" style="left:319.800px;top:8.400px"><svg width="18" height="14" viewBox="0 0 18 14"><rect x="2.100" y="2.600" width="9.400" height="8.600" rx=".8" fill="#d0d0d3"/><path d="M11.800 6.900l4.700-4.300v8.600z" fill="#d0d0d3"/><path d="M1.600 12.100L11.800 1.700" stroke="#ff766e" stroke-width="1.050"/></svg></div></div>
<div class="row" style="top:375.3px"><div class="av"><svg width="28.6" height="28.6" viewBox="0 0 28 28" style="display:block;background:#ffffff"><g filter="url(#bl3)" transform="translate(14 14) scale(1.16) translate(-14.800 -13.500)"><path d="M7 10c0-5 4-8 8-8s7 2 8 6l-1 3H7z" fill="#b8403e"/><circle cx="23.500" cy="9.500" r="1.800" fill="#f2eeee"/><rect x="6" y="9" width="17" height="3" rx="1.500" fill="#f4f0ee" stroke="#bbb" stroke-width=".3"/><path d="M7 12h15v11c-4 2.500-11 2.500-15 0z" fill="#f6f2f0" stroke="#b8b0b0" stroke-width=".4"/><rect x="7.500" y="14" width="2.500" height="6" fill="#c03a3a"/><rect x="11" y="14.500" width="1.300" height="5" fill="#c85050"/><rect x="13.500" y="14" width="1.800" height="6" fill="#d05a5a"/><rect x="17" y="13.500" width="3" height="7" fill="#b83434"/><rect x="16.500" y="20" width="4" height="4" fill="#c44848"/><path d="M9 24c3 1.500 8 1.500 11 0" stroke="#999" stroke-width=".5" fill="none"/></g></svg></div><div class="nm">2103<span class="c">邹诗萱</span></div><div class="ic" style="left:298.600px;top:6px"><svg width="16" height="18" viewBox="0 0 16 18"><rect x="5.300" y="1.600" width="5.400" height="10" rx="2.700" fill="#d0d0d3"/><path d="M2.900 8.500c0 3.300 2.200 5.300 5.100 5.300s5.100-2 5.100-5.300" stroke="#d0d0d3" stroke-width="1" fill="none"/><path d="M8 13.800v2.300M4.800 16.400h6.400" stroke="#d0d0d3" stroke-width="1" fill="none"/><path d="M1.700 15.400L14.400 2.700" stroke="#ff766e" stroke-width="1.050"/></svg></div><div class="ic" style="left:319.800px;top:8.400px"><svg width="18" height="14" viewBox="0 0 18 14"><rect x="2.100" y="2.600" width="9.400" height="8.600" rx=".8" fill="#d0d0d3"/><path d="M11.800 6.900l4.700-4.300v8.600z" fill="#d0d0d3"/><path d="M1.600 12.100L11.800 1.700" stroke="#ff766e" stroke-width="1.050"/></svg></div></div>
<div class="row" style="top:417.2px"><div class="av"><svg width="28.6" height="28.6" viewBox="0 0 28 28" style="display:block;background:#e4c6c0"><g filter="url(#bl5)"><rect width="28" height="28" fill="#e6ccc6"/><path d="M14 0h14v22l-8 4z" fill="#f1e4e0"/><path d="M3 9c0-5 4-7.500 8-7 3 .5 5 3 5 6l-2 9c-1 3-3 5-6 5-4-2-5-8-5-13z" fill="#8e5f55"/><path d="M10 9c2-1 4 0 4.500 2l-.5 4c-1 1.500-3 1.500-4 .5z" fill="#f0d4c8"/><path d="M18 3l2.500 7h-4z" fill="#c98a86"/><path d="M17 11c2-1 5-.5 6 2l1 6c-2 2-6 2-8 0z" fill="#f8f0ee" stroke="#b58c88" stroke-width=".5"/><path d="M8 20c3-1 7 0 9 3l2 5H5z" fill="#d9a29a"/><circle cx="6.500" cy="6" r="1.500" fill="#b5605c"/></g></svg></div><div class="nm">2105<span class="c">陈梦圆</span></div><div class="ic" style="left:298.600px;top:6px"><svg width="16" height="18" viewBox="0 0 16 18"><rect x="5.300" y="1.600" width="5.400" height="10" rx="2.700" fill="#d0d0d3"/><path d="M2.900 8.500c0 3.300 2.200 5.300 5.100 5.300s5.100-2 5.100-5.300" stroke="#d0d0d3" stroke-width="1" fill="none"/><path d="M8 13.800v2.300M4.800 16.400h6.400" stroke="#d0d0d3" stroke-width="1" fill="none"/><path d="M1.700 15.400L14.400 2.700" stroke="#ff766e" stroke-width="1.050"/></svg></div><div class="ic" style="left:319.800px;top:8.400px"><svg width="18" height="14" viewBox="0 0 18 14"><rect x="2.100" y="2.600" width="9.400" height="8.600" rx=".8" fill="#d0d0d3"/><path d="M11.800 6.900l4.700-4.300v8.600z" fill="#d0d0d3"/><path d="M1.600 12.100L11.800 1.700" stroke="#ff766e" stroke-width="1.050"/></svg></div></div>
<div class="row" style="top:459.0px"><div class="av"><svg width="28.6" height="28.6" viewBox="0 0 28 28" style="display:block;background:#efe7d8"><g filter="url(#bl5)"><rect width="28" height="28" fill="#f0e8da"/><path d="M0 10L18 2l10 3v6L4 15z" fill="#e6d9c2"/><path d="M3 3l9 9" stroke="#c9b99c" stroke-width=".6"/><path d="M0 15l28-6v3L0 18z" fill="#cfc2aa"/><path d="M0 17.500l28-5v3L0 19.500z" fill="#8a8474"/><path d="M0 19l28-4v13H0z" fill="#43b39c"/><path d="M0 23h28v5H0z" fill="#59c3ae"/><rect x="9" y="19.500" width="5" height="1.200" fill="#20705f"/></g></svg></div><div class="nm">change</div><div class="ic" style="left:298.600px;top:6px"><svg width="16" height="18" viewBox="0 0 16 18"><rect x="5.300" y="1.600" width="5.400" height="10" rx="2.700" fill="#d0d0d3"/><path d="M2.900 8.500c0 3.300 2.200 5.300 5.100 5.300s5.100-2 5.100-5.300" stroke="#d0d0d3" stroke-width="1" fill="none"/><path d="M8 13.800v2.300M4.800 16.400h6.400" stroke="#d0d0d3" stroke-width="1" fill="none"/><path d="M1.700 15.400L14.400 2.700" stroke="#ff766e" stroke-width="1.050"/></svg></div><div class="ic" style="left:319.800px;top:8.400px"><svg width="18" height="14" viewBox="0 0 18 14"><rect x="2.100" y="2.600" width="9.400" height="8.600" rx=".8" fill="#d0d0d3"/><path d="M11.800 6.900l4.700-4.300v8.600z" fill="#d0d0d3"/><path d="M1.600 12.100L11.800 1.700" stroke="#ff766e" stroke-width="1.050"/></svg></div></div>
<div class="row" style="top:500.9px"><div class="av"><svg width="28.6" height="28.6" viewBox="0 0 28 28" style="display:block;background:#6e5038"><g filter="url(#bl5)"><rect width="28" height="28" fill="#6b4e38"/><rect x="0" y="0" width="28" height="8" fill="#8a6a4c"/><rect x="20" y="0" width="8" height="28" fill="#4a3626"/><path d="M11 9c0-4 3-6 6.500-6S24 6 23.500 10l-1 6H12z" fill="#191412"/><ellipse cx="17.500" cy="11.500" rx="4.200" ry="4.500" fill="#f0c8b0"/><path d="M13 8c2-2 6-2.500 9 0l-1-3h-7z" fill="#191412"/><path d="M5 28c0-6 3-10 8-11l9 0c3 1 5 5 5 11z" fill="#e2c27a"/><path d="M12 17l5 4 5-4" fill="#f4efe4"/><path d="M4 12l3-3 3 1 2 4-3 4-4-2z" fill="#f2d2bc"/><path d="M5 9l1.500 4M8 8.500l.5 4" stroke="#f2d2bc" stroke-width="1.200"/></g></svg></div><div class="nm">Doris</div><div class="ic" style="left:298.600px;top:6px"><svg width="16" height="18" viewBox="0 0 16 18"><rect x="5.300" y="1.600" width="5.400" height="10" rx="2.700" fill="#d0d0d3"/><path d="M2.900 8.500c0 3.300 2.200 5.300 5.100 5.300s5.100-2 5.100-5.300" stroke="#d0d0d3" stroke-width="1" fill="none"/><path d="M8 13.800v2.300M4.800 16.400h6.400" stroke="#d0d0d3" stroke-width="1" fill="none"/><path d="M1.700 15.400L14.400 2.700" stroke="#ff766e" stroke-width="1.050"/></svg></div><div class="ic" style="left:319.800px;top:8.400px"><svg width="18" height="14" viewBox="0 0 18 14"><rect x="2.100" y="2.600" width="9.400" height="8.600" rx=".8" fill="#d0d0d3"/><path d="M11.800 6.900l4.700-4.300v8.600z" fill="#d0d0d3"/><path d="M1.600 12.100L11.800 1.700" stroke="#ff766e" stroke-width="1.050"/></svg></div></div>
<div class="row" style="top:542.8px"><div class="av"><svg width="28.6" height="28.6" viewBox="0 0 28 28" style="display:block;background:#25314e"><g filter="url(#bl5)"><rect width="28" height="28" fill="#27324e"/><rect x="0" y="0" width="28" height="9" fill="#1a2238"/><rect x="2" y="8" width="12" height="3" fill="#38508a"/><path d="M16 6c1-3 7-3 8.500 0l.5 6h-9z" fill="#15131a"/><ellipse cx="20.500" cy="9.500" rx="3" ry="3.500" fill="#efc9b4"/><path d="M16.500 7c2-2 6-2 8 0l-.5-2.500h-7z" fill="#15131a"/><path d="M1 28l2-13 8-3 6 2 8-1 3 15z" fill="#a79be0"/><path d="M10 13l3 15" stroke="#8478c8" stroke-width=".8"/><path d="M3 15l6 4 8-5" stroke="#c4baf0" stroke-width="1" fill="none"/><rect x="22" y="14" width="4" height="9" fill="#e8c4ae"/></g></svg></div><div class="nm">e</div><div class="ic" style="left:298.600px;top:6px"><svg width="16" height="18" viewBox="0 0 16 18"><rect x="5.300" y="1.600" width="5.400" height="10" rx="2.700" fill="#d0d0d3"/><path d="M2.900 8.500c0 3.300 2.200 5.300 5.100 5.300s5.100-2 5.100-5.300" stroke="#d0d0d3" stroke-width="1" fill="none"/><path d="M8 13.800v2.300M4.800 16.400h6.400" stroke="#d0d0d3" stroke-width="1" fill="none"/><path d="M1.700 15.400L14.400 2.700" stroke="#ff766e" stroke-width="1.050"/></svg></div><div class="ic" style="left:319.800px;top:8.400px"><svg width="18" height="14" viewBox="0 0 18 14"><rect x="2.100" y="2.600" width="9.400" height="8.600" rx=".8" fill="#d0d0d3"/><path d="M11.800 6.900l4.700-4.300v8.600z" fill="#d0d0d3"/><path d="M1.600 12.100L11.800 1.700" stroke="#ff766e" stroke-width="1.050"/></svg></div></div>
<div class="row" style="top:584.6px"><div class="av blue" style="line-height:28.600px;font-size:11px">K</div><div class="nm">Kiki</div><div class="ic" style="left:298.600px;top:6px"><svg width="16" height="18" viewBox="0 0 16 18"><rect x="5.300" y="1.600" width="5.400" height="10" rx="2.700" fill="#d0d0d3"/><path d="M2.900 8.500c0 3.300 2.200 5.300 5.100 5.300s5.100-2 5.100-5.300" stroke="#d0d0d3" stroke-width="1" fill="none"/><path d="M8 13.800v2.300M4.800 16.400h6.400" stroke="#d0d0d3" stroke-width="1" fill="none"/><path d="M1.700 15.400L14.400 2.700" stroke="#ff766e" stroke-width="1.050"/></svg></div><div class="ic" style="left:319.800px;top:8.400px"><svg width="18" height="14" viewBox="0 0 18 14"><rect x="2.100" y="2.600" width="9.400" height="8.600" rx=".8" fill="#d0d0d3"/><path d="M11.800 6.900l4.700-4.300v8.600z" fill="#d0d0d3"/><path d="M1.600 12.100L11.800 1.700" stroke="#ff766e" stroke-width="1.050"/></svg></div></div>
<div class="row" style="top:626.5px"><div class="av"><svg width="28.6" height="28.6" viewBox="0 0 28 28" style="display:block;background:#5f86cc"><g filter="url(#bl5)"><rect width="28" height="28" fill="#5c84cc"/><rect width="28" height="10" fill="#4a74c4"/><path d="M0 14l9-3 4 2v11H0z" fill="#8d7f6e"/><path d="M0 17l12-1v3H0z" fill="#6b5f52"/><path d="M0 21h28v7H0z" fill="#2e2a24"/><path d="M12 24l3-2 13 1v5H12z" fill="#4a4436"/><path d="M16 24c0-8 .5-14 1.500-19l1.800 0c-.6 6-.8 12-.3 19z" fill="#5a4630"/><path d="M21.500 24c.5-7 .5-12 0-17l1.500-.5c1 5 1 11 .5 17.500z" fill="#4e3c28"/><ellipse cx="19" cy="4.500" rx="4.500" ry="2.600" fill="#e8cc20"/><ellipse cx="15.500" cy="5.500" rx="2" ry="1.500" fill="#c9ac18"/><circle cx="20" cy="4" r="1.200" fill="#3a3010"/></g></svg></div><div class="nm">shaoyinj</div><div class="ic" style="left:298.600px;top:6px"><svg width="16" height="18" viewBox="0 0 16 18"><rect x="5.300" y="1.600" width="5.400" height="10" rx="2.700" fill="#d0d0d3"/><path d="M2.900 8.500c0 3.300 2.200 5.300 5.100 5.300s5.100-2 5.100-5.300" stroke="#d0d0d3" stroke-width="1" fill="none"/><path d="M8 13.800v2.300M4.800 16.400h6.400" stroke="#d0d0d3" stroke-width="1" fill="none"/><path d="M1.700 15.400L14.400 2.700" stroke="#ff766e" stroke-width="1.050"/></svg></div><div class="ic" style="left:319.800px;top:8.400px"><svg width="18" height="14" viewBox="0 0 18 14"><rect x="2.100" y="2.600" width="9.400" height="8.600" rx=".8" fill="#d0d0d3"/><path d="M11.800 6.900l4.700-4.300v8.600z" fill="#d0d0d3"/><path d="M1.600 12.100L11.800 1.700" stroke="#ff766e" stroke-width="1.050"/></svg></div></div>
<div class="row" style="top:668.3px"><div class="av blue" style="line-height:28.600px;font-size:11px">Z</div><div class="nm">Zuo</div><div class="ic" style="left:298.600px;top:6px"><svg width="16" height="18" viewBox="0 0 16 18"><rect x="5.300" y="1.600" width="5.400" height="10" rx="2.700" fill="#d0d0d3"/><path d="M2.900 8.500c0 3.300 2.200 5.300 5.100 5.300s5.100-2 5.100-5.300" stroke="#d0d0d3" stroke-width="1" fill="none"/><path d="M8 13.800v2.300M4.800 16.400h6.400" stroke="#d0d0d3" stroke-width="1" fill="none"/><path d="M1.700 15.400L14.400 2.700" stroke="#ff766e" stroke-width="1.050"/></svg></div><div class="ic" style="left:319.800px;top:8.400px"><svg width="18" height="14" viewBox="0 0 18 14"><rect x="2.100" y="2.600" width="9.400" height="8.600" rx=".8" fill="#d0d0d3"/><path d="M11.800 6.900l4.700-4.300v8.600z" fill="#d0d0d3"/><path d="M1.600 12.100L11.800 1.700" stroke="#ff766e" stroke-width="1.050"/></svg></div></div>
<div class="row" style="top:710.2px"><div class="av"><svg width="28.6" height="28.6" viewBox="0 0 28 28" style="display:block;background:#050505"><g filter="url(#bl5)"><rect width="28" height="28" fill="#060606"/><path d="M11 6c0-3 3-4.500 5.500-4.500S22 3.500 21.500 7l-1 3.500h-9z" fill="#c8322e"/><ellipse cx="15" cy="8" rx="2.600" ry="3" fill="#f0d0b8"/><path d="M12.500 5.500c2-1.500 5-1.500 6 .5l1.500 4 1-4-2-3.500h-5z" fill="#d23a34"/><path d="M9 28c-.5-7 0-13 3-16l6-.5c3 3 4 9 3.500 16.500z" fill="#f0e08a"/><path d="M12 13l4 7 3-7" fill="#f8f0d0"/><path d="M10 17l6 3-1 3-6-3z" fill="#f4e8a8"/><rect x="7" y="19" width="3" height="6" fill="#b82a2a"/><path d="M15 20l1 8" stroke="#d0bc5a" stroke-width=".8"/></g></svg></div><div class="nm"><span class="c">财税</span>2102<span class="c">杨鑫</span></div><div class="ic" style="left:298.600px;top:6px"><svg width="16" height="18" viewBox="0 0 16 18"><rect x="5.300" y="1.600" width="5.400" height="10" rx="2.700" fill="#d0d0d3"/><path d="M2.900 8.500c0 3.300 2.200 5.300 5.100 5.300s5.100-2 5.100-5.300" stroke="#d0d0d3" stroke-width="1" fill="none"/><path d="M8 13.800v2.300M4.800 16.400h6.400" stroke="#d0d0d3" stroke-width="1" fill="none"/><path d="M1.700 15.400L14.400 2.700" stroke="#ff766e" stroke-width="1.050"/></svg></div><div class="ic" style="left:319.800px;top:8.400px"><svg width="18" height="14" viewBox="0 0 18 14"><rect x="2.100" y="2.600" width="9.400" height="8.600" rx=".8" fill="#d0d0d3"/><path d="M11.800 6.900l4.700-4.300v8.600z" fill="#d0d0d3"/><path d="M1.600 12.100L11.800 1.700" stroke="#ff766e" stroke-width="1.050"/></svg></div></div>
<div class="abs" style="left:0;top:751.5px;width:352px;height:1px;background:#e6e8ec"></div>
<div class="btn" style="left:42.500px;width:83.500px">全体静音</div>
<div class="btn" style="left:141.500px;width:83.500px">解除全体静音</div>
<div class="btn" style="left:240.500px;width:68px;padding-right:12px">更多<svg style="position:absolute;left:45px;top:9.500px" width="6" height="4" viewBox="0 0 6 4"><path d="M0 0h6L3 4z" fill="#1677ff"/></svg></div>
</div>
</div>
</body>
</html>
